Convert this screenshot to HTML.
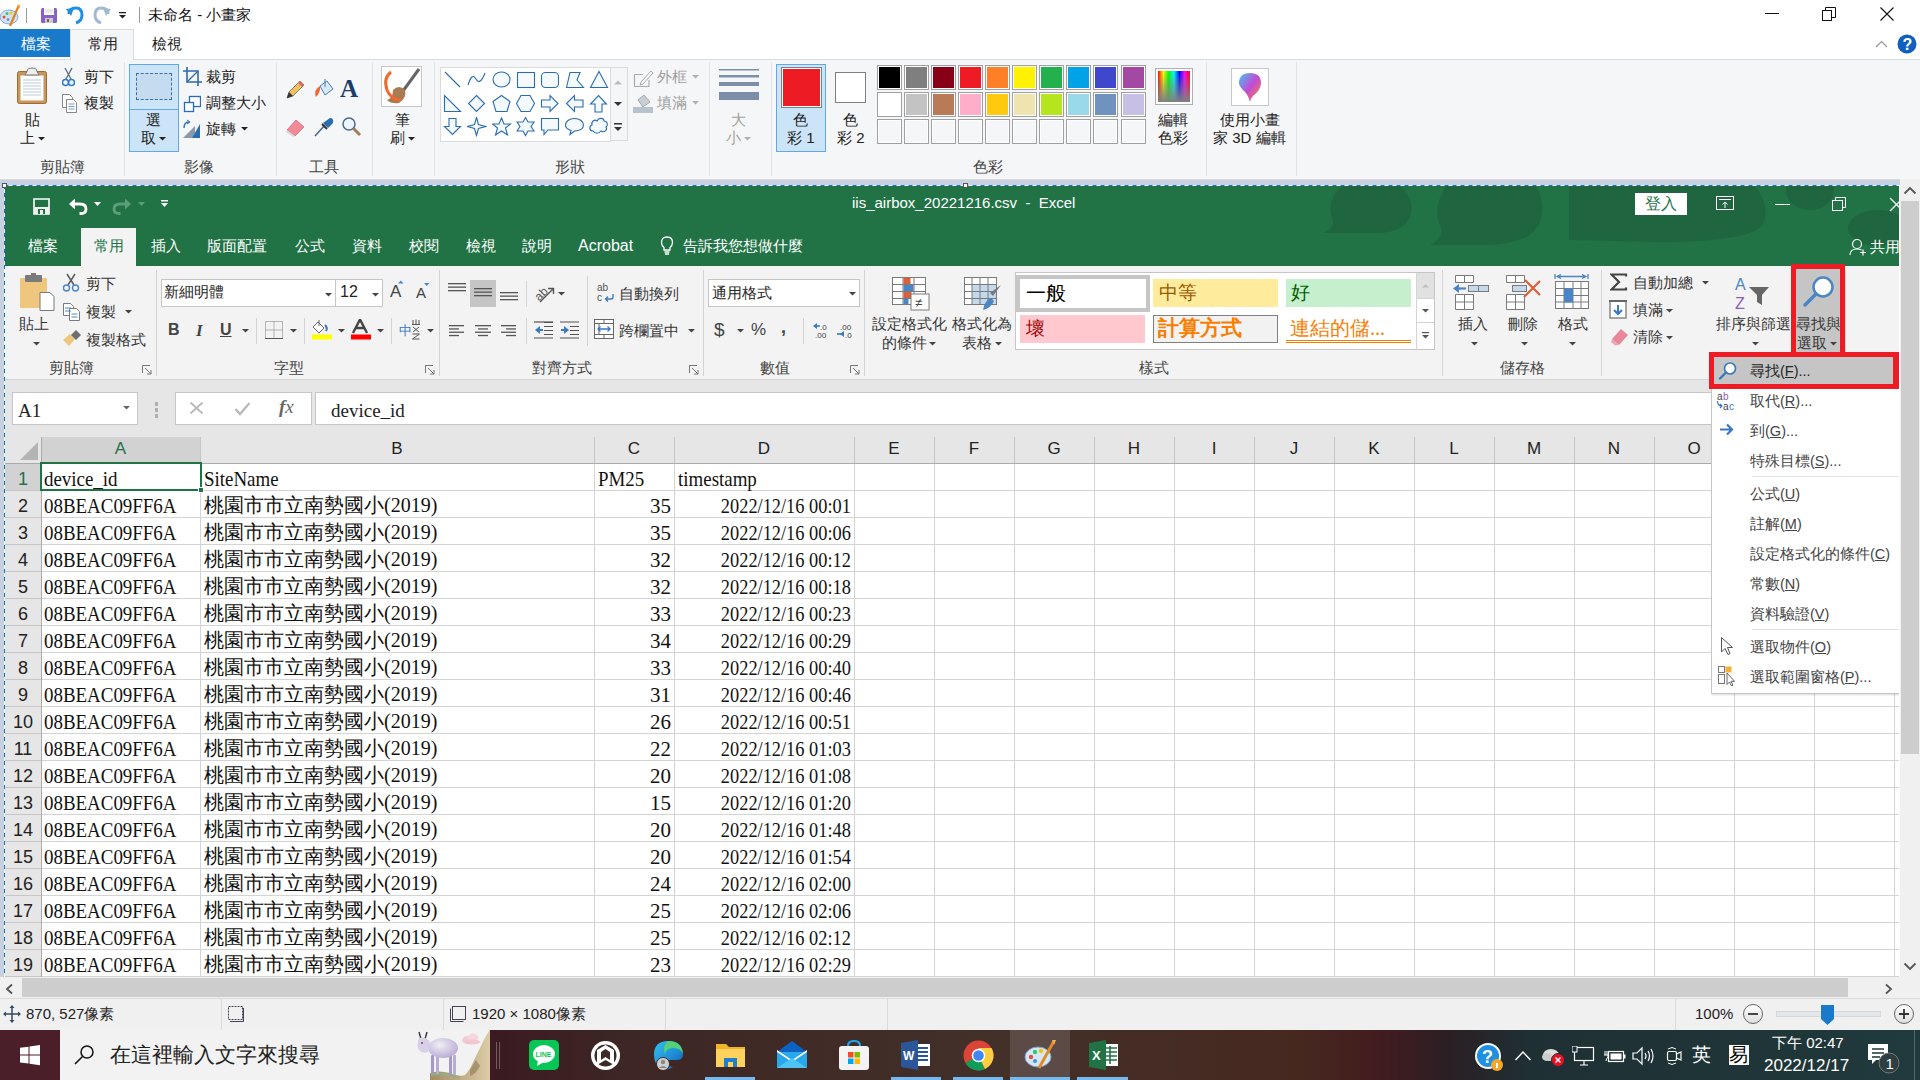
<!DOCTYPE html><html><head><meta charset="utf-8"><style>
*{box-sizing:border-box}
body{margin:0;width:1920px;height:1080px;position:relative;overflow:hidden;background:#fff;font-family:"Liberation Sans",sans-serif;color:#000}
.a{position:absolute}
.t{position:absolute;white-space:nowrap;line-height:1}
</style></head><body><div class="a" style="left:0px;top:0px;width:1920px;height:30px;background:#fff"></div><div class="a" style="left:0px;top:59px;width:1920px;height:121px;background:#f5f6f7;border-top:1px solid #dadbdc;border-bottom:1px solid #dadbdc"></div><div class="a" style="left:0px;top:29px;width:70px;height:28px;background:#1979ca"></div><div class="a" style="left:70px;top:29px;width:64px;height:31px;background:#f5f6f7;border:1px solid #dadbdc;border-bottom:none"></div><svg class="a" style="left:0px;top:4px" width="21" height="22" viewBox="0 0 21 22"><ellipse cx="9" cy="13" rx="9" ry="7" fill="#cfe3f3" stroke="#6e9bc8" stroke-width="0.8"/><circle cx="4" cy="13" r="1.5" fill="#e74c3c"/><circle cx="7" cy="9.5" r="1.5" fill="#2ecc71"/><circle cx="11" cy="9" r="1.5" fill="#f1c40f"/><circle cx="8" cy="15.5" r="1.3" fill="#3498db"/><path d="M19 1L10 22" stroke="#e67e22" stroke-width="2.2"/><path d="M17.5 1h3l-1 4z" fill="#f5b041"/></svg><div class="a" style="left:26px;top:8px;width:1px;height:15px;background:#999"></div><svg class="a" style="left:41px;top:8px" width="17" height="16" viewBox="0 0 17 16"><rect x="0" y="0" width="16" height="15" rx="1.5" fill="#8a5fc7"/><rect x="3" y="0" width="10" height="7" fill="#fff"/><path d="M4 2h8M4 4h8" stroke="#bbb" stroke-width="0.7"/><rect x="4" y="10" width="8" height="5" fill="#ccc"/><rect x="6" y="11" width="2" height="3" fill="#666"/></svg><svg class="a" style="left:66px;top:5px" width="19" height="20" viewBox="0 0 19 20"><path d="M3 9 Q3 3 10 3 Q16 3 16 10 Q16 16 10 18" fill="none" stroke="#1e8fe1" stroke-width="3"/><path d="M0 4L5 11L8 3z" fill="#1e8fe1"/></svg><svg class="a" style="left:92px;top:5px" width="19" height="20" viewBox="0 0 19 20"><path d="M16 9 Q16 3 9 3 Q3 3 3 10 Q3 16 9 18" fill="none" stroke="#a3b8d2" stroke-width="3"/><path d="M19 4L14 11L11 3z" fill="#a3b8d2"/></svg><svg class="a" style="left:119px;top:12px" width="8" height="8" viewBox="0 0 8 8"><rect x="0" y="0" width="7" height="1.3" fill="#222"/><path d="M0 3h7l-3.5 3.5z" fill="#222"/></svg><div class="a" style="left:139px;top:7px;width:1px;height:16px;background:#999"></div><div class="t" style="left:148px;top:7px;font-size:15px;color:#111;">未命名 - 小畫家</div><div class="a" style="left:1765px;top:13px;width:14px;height:1px;background:#111"></div><svg class="a" style="left:1822px;top:7px" width="14" height="14" viewBox="0 0 14 14"><rect x="0.5" y="3.5" width="9" height="10" fill="none" stroke="#111"/><path d="M3.5 3.5V0.5H13.5V10.5H9.5" fill="none" stroke="#111"/></svg><svg class="a" style="left:1880px;top:7px" width="14" height="14" viewBox="0 0 14 14"><path d="M0.5 0.5L13.5 13.5M13.5 0.5L0.5 13.5" stroke="#111" stroke-width="1.1"/></svg><div class="t" style="left:21px;top:36px;font-size:15px;color:#fff;">檔案</div><div class="t" style="left:88px;top:36px;font-size:15px;color:#222;">常用</div><div class="t" style="left:152px;top:36px;font-size:15px;color:#222;">檢視</div><svg class="a" style="left:1875px;top:40px" width="13" height="8" viewBox="0 0 13 8"><path d="M1 7L6.5 1.5L12 7" fill="none" stroke="#999" stroke-width="1.2"/></svg><svg class="a" style="left:1897px;top:34px" width="20" height="20" viewBox="0 0 20 20"><circle cx="10" cy="10" r="9.5" fill="#1160c0"/><text x="5.5" y="16" font-size="16" font-weight="bold" fill="#fff" font-family="Liberation Sans">?</text></svg><div class="a" style="left:124px;top:62px;width:1px;height:114px;background:#e1e2e4"></div><div class="a" style="left:276px;top:62px;width:1px;height:114px;background:#e1e2e4"></div><div class="a" style="left:372px;top:62px;width:1px;height:114px;background:#e1e2e4"></div><div class="a" style="left:434px;top:62px;width:1px;height:114px;background:#e1e2e4"></div><div class="a" style="left:709px;top:62px;width:1px;height:114px;background:#e1e2e4"></div><div class="a" style="left:771px;top:62px;width:1px;height:114px;background:#e1e2e4"></div><div class="a" style="left:1206px;top:62px;width:1px;height:114px;background:#e1e2e4"></div><div class="a" style="left:1296px;top:62px;width:1px;height:114px;background:#e1e2e4"></div><svg class="a" style="left:16px;top:67px" width="32" height="38" viewBox="0 0 32 38"><rect x="1.5" y="4.5" width="29" height="32" rx="2" fill="#c8955a" stroke="#a06a30"/><rect x="4.5" y="8.5" width="23" height="25" fill="#fff"/><path d="M7 13h18M7 16h18M7 19h18M7 22h18M7 25h18M7 28h18" stroke="#b9c9dc"/><path d="M11 4.5 Q11 1 16 1 Q21 1 21 4.5 L23 8 H9z" fill="#eee" stroke="#777"/></svg><div class="t" style="left:25px;top:112px;font-size:15px;color:#222;">貼</div><div class="t" style="left:20px;top:130px;font-size:15px;color:#222;">上</div><svg class="a" style="left:38px;top:137px" width="7" height="4" viewBox="0 0 7 4"><path d="M0 0h7l-3.5 3.5z" fill="#222"/></svg><svg class="a" style="left:62px;top:67px" width="13" height="20" viewBox="0 0 13 20"><path d="M3 1L9 12M10 1L4 12" stroke="#5a6a7a" stroke-width="1.3"/><circle cx="3.5" cy="15.5" r="3" fill="none" stroke="#2b7bd3" stroke-width="1.5"/><circle cx="9.5" cy="15.5" r="3" fill="none" stroke="#2b7bd3" stroke-width="1.5"/></svg><div class="t" style="left:84px;top:69px;font-size:15px;color:#222;">剪下</div><svg class="a" style="left:61px;top:93px" width="17" height="21" viewBox="0 0 17 21"><path d="M1.5 1.5h7l3 3v10h-10z" fill="#fff" stroke="#888"/><path d="M5.5 6.5h7l3 3v10h-10z" fill="#fff" stroke="#888"/><path d="M7.5 11h6M7.5 13.5h6M7.5 16h6" stroke="#6b9bd2"/></svg><div class="t" style="left:84px;top:95px;font-size:15px;color:#222;">複製</div><div class="t" style="left:40px;top:159px;font-size:15px;color:#444;">剪貼簿</div><div class="a" style="left:129px;top:64px;width:50px;height:88px;background:#cce4f7;border:1px solid #62a7e6"></div><div class="a" style="left:130px;top:109px;width:48px;height:1px;background:#62a7e6"></div><div class="a" style="left:136px;top:73px;width:36px;height:27px;border:1px dashed #3a6ea5;background:#c5dcf0"></div><div class="t" style="left:146px;top:112px;font-size:15px;color:#222;">選</div><div class="t" style="left:141px;top:130px;font-size:15px;color:#222;">取</div><svg class="a" style="left:159px;top:137px" width="7" height="4" viewBox="0 0 7 4"><path d="M0 0h7l-3.5 3.5z" fill="#222"/></svg><svg class="a" style="left:183px;top:67px" width="19" height="20" viewBox="0 0 19 20"><path d="M4 0v15h15M0 4h15v15" fill="none" stroke="#2b6cb0" stroke-width="1.6"/><path d="M4 15L15 4" stroke="#2b6cb0" stroke-width="1.2"/></svg><div class="t" style="left:206px;top:69px;font-size:15px;color:#222;">裁剪</div><svg class="a" style="left:183px;top:95px" width="18" height="18" viewBox="0 0 18 18"><rect x="6.5" y="1.5" width="11" height="10" fill="#fff" stroke="#2b6cb0" stroke-width="1.3"/><rect x="1.5" y="7.5" width="9" height="9" fill="#fff" stroke="#2b6cb0" stroke-width="1.3"/></svg><div class="t" style="left:206px;top:95px;font-size:15px;color:#222;">調整大小</div><svg class="a" style="left:182px;top:119px" width="19" height="19" viewBox="0 0 19 19"><path d="M1 19L13 7V19z" fill="#8a9aab"/><path d="M10 19L18 5V19z" fill="#2b6cb0"/><path d="M2 9Q2 3 7 3" fill="none" stroke="#2b6cb0" stroke-width="1.3"/><path d="M5 1L8 3L5 5" fill="none" stroke="#2b6cb0"/></svg><div class="t" style="left:206px;top:121px;font-size:15px;color:#222;">旋轉</div><svg class="a" style="left:241px;top:127px" width="7" height="4" viewBox="0 0 7 4"><path d="M0 0h7l-3.5 3.5z" fill="#222"/></svg><div class="t" style="left:184px;top:159px;font-size:15px;color:#444;">影像</div><svg class="a" style="left:285px;top:79px" width="21" height="21" viewBox="0 0 21 21"><path d="M2 19L4 13L15 2L19 6L8 17z" fill="#f2c25c" stroke="#666" stroke-width="0.8"/><path d="M15 2L19 6L17 8L13 4z" fill="#e26b6b"/><path d="M2 19L4 13L8 17z" fill="#333"/></svg><svg class="a" style="left:313px;top:78px" width="21" height="22" viewBox="0 0 21 22"><path d="M7 8L14 3L20 11L12 17z" fill="#dbe9f6" stroke="#4a7eb5"/><path d="M12 1v8" stroke="#4a7eb5"/><path d="M7 8Q0 12 3 19Q6 16 7 12z" fill="#ef6a2e"/></svg><div class="t" style="left:340px;top:76px;font-size:25px;color:#1b3d6d;font-family:'Liberation Serif',serif"><b>A</b></div><svg class="a" style="left:285px;top:117px" width="21" height="21" viewBox="0 0 21 21"><path d="M2 13L11 3L19 10L10 19z" fill="#f08a98" stroke="#d46a78" stroke-width="0.8"/><path d="M2 13L10 19L8 20L1 15z" fill="#d9d9d9"/></svg><svg class="a" style="left:313px;top:116px" width="21" height="22" viewBox="0 0 21 22"><path d="M2 20L12 9" stroke="#4a6a8a" stroke-width="1.6"/><path d="M10 7L15 12L20 7Q21 2 17 2z" fill="#2b6cb0"/><path d="M9 8L14 13" stroke="#333" stroke-width="2"/></svg><svg class="a" style="left:341px;top:116px" width="21" height="22" viewBox="0 0 21 22"><circle cx="8" cy="8" r="6" fill="#eef5fb" stroke="#4a6a8a" stroke-width="1.5"/><path d="M12.5 12.5L19 19" stroke="#a67c52" stroke-width="3"/></svg><div class="t" style="left:309px;top:159px;font-size:15px;color:#444;">工具</div><svg class="a" style="left:381px;top:66px" width="42" height="42" viewBox="0 0 42 42"><rect x="0.5" y="0.5" width="40" height="40" fill="#fff" stroke="#c8c8c8"/><path d="M38 3L22 25" stroke="#666" stroke-width="3"/><path d="M12 24 Q18 18 24 24 Q26 32 18 37 Q10 38 6 34 Q12 32 12 24z" fill="#a97b50"/><path d="M10 6 Q2 12 6 24 Q10 34 20 34" fill="none" stroke="#ef6a2e" stroke-width="3"/></svg><div class="t" style="left:395px;top:112px;font-size:15px;color:#222;">筆</div><div class="t" style="left:390px;top:130px;font-size:15px;color:#222;">刷</div><svg class="a" style="left:408px;top:137px" width="7" height="4" viewBox="0 0 7 4"><path d="M0 0h7l-3.5 3.5z" fill="#222"/></svg><div class="a" style="left:440px;top:67px;width:171px;height:75px;background:#fff;border:1px solid #dadbdc"></div><div class="a" style="left:610px;top:67px;width:18px;height:74px;background:#f5f6f7;border:1px solid #dadbdc"></div><svg class="a" style="left:614px;top:80px" width="9" height="5" viewBox="0 0 9 5"><path d="M0 4.5h8l-4-4z" fill="#bbb"/></svg><svg class="a" style="left:614px;top:102px" width="9" height="5" viewBox="0 0 9 5"><path d="M0 0h8l-4 4z" fill="#333"/></svg><svg class="a" style="left:614px;top:123px" width="9" height="9" viewBox="0 0 9 9"><rect x="0" y="0" width="8" height="1.5" fill="#333"/><path d="M0 4h8l-4 4z" fill="#333"/></svg><svg class="a" style="left:443.0px;top:70.0px" width="20" height="20" viewBox="0 0 20 20"><g fill="#f4f9fd" stroke="#2b6cb0" stroke-width="1.1"><path d="M2 2L17 17" /></g></svg><svg class="a" style="left:467.3px;top:70.0px" width="20" height="20" viewBox="0 0 20 20"><g fill="#f4f9fd" stroke="#2b6cb0" stroke-width="1.1"><path d="M1 15 Q5 2 9 9 Q13 16 18 3"/></g></svg><svg class="a" style="left:491.6px;top:70.0px" width="20" height="20" viewBox="0 0 20 20"><g fill="#f4f9fd" stroke="#2b6cb0" stroke-width="1.1"><ellipse cx="9.5" cy="9.5" rx="8.5" ry="7.5"/></g></svg><svg class="a" style="left:515.9px;top:70.0px" width="20" height="20" viewBox="0 0 20 20"><g fill="#f4f9fd" stroke="#2b6cb0" stroke-width="1.1"><rect x="1.5" y="2.5" width="17" height="15"/></g></svg><svg class="a" style="left:540.2px;top:70.0px" width="20" height="20" viewBox="0 0 20 20"><g fill="#f4f9fd" stroke="#2b6cb0" stroke-width="1.1"><rect x="1.5" y="2.5" width="17" height="15" rx="4"/></g></svg><svg class="a" style="left:564.5px;top:70.0px" width="20" height="20" viewBox="0 0 20 20"><g fill="#f4f9fd" stroke="#2b6cb0" stroke-width="1.1"><path d="M1.5 17.5L5 2.5H15L12 10L18.5 17.5z"/></g></svg><svg class="a" style="left:588.8px;top:70.0px" width="20" height="20" viewBox="0 0 20 20"><g fill="#f4f9fd" stroke="#2b6cb0" stroke-width="1.1"><path d="M10 1.5L18.5 17.5H1.5z"/></g></svg><svg class="a" style="left:443.0px;top:93.5px" width="20" height="20" viewBox="0 0 20 20"><g fill="#f4f9fd" stroke="#2b6cb0" stroke-width="1.1"><path d="M1.5 1.5V17.5H17.5z"/></g></svg><svg class="a" style="left:467.3px;top:93.5px" width="20" height="20" viewBox="0 0 20 20"><g fill="#f4f9fd" stroke="#2b6cb0" stroke-width="1.1"><path d="M9.5 1.5L17.5 9.5L9.5 17.5L1.5 9.5z"/></g></svg><svg class="a" style="left:491.6px;top:93.5px" width="20" height="20" viewBox="0 0 20 20"><g fill="#f4f9fd" stroke="#2b6cb0" stroke-width="1.1"><path d="M9.5 1.5L18 7.5L15 17.5H4L1 7.5z"/></g></svg><svg class="a" style="left:515.9px;top:93.5px" width="20" height="20" viewBox="0 0 20 20"><g fill="#f4f9fd" stroke="#2b6cb0" stroke-width="1.1"><path d="M5 1.5H14L18.5 9.5L14 17.5H5L0.5 9.5z"/></g></svg><svg class="a" style="left:540.2px;top:93.5px" width="20" height="20" viewBox="0 0 20 20"><g fill="#f4f9fd" stroke="#2b6cb0" stroke-width="1.1"><path d="M1.5 6H10V1.5L18 9.5L10 17.5V13H1.5z"/></g></svg><svg class="a" style="left:564.5px;top:93.5px" width="20" height="20" viewBox="0 0 20 20"><g fill="#f4f9fd" stroke="#2b6cb0" stroke-width="1.1"><path d="M18 6H9.5V1.5L1.5 9.5L9.5 17.5V13H18z"/></g></svg><svg class="a" style="left:588.8px;top:93.5px" width="20" height="20" viewBox="0 0 20 20"><g fill="#f4f9fd" stroke="#2b6cb0" stroke-width="1.1"><path d="M6 18V10H1.5L9.5 1.5L17.5 10H13V18z"/></g></svg><svg class="a" style="left:443.0px;top:117.0px" width="20" height="20" viewBox="0 0 20 20"><g fill="#f4f9fd" stroke="#2b6cb0" stroke-width="1.1"><path d="M6 1.5V9.5H1.5L9.5 17.5L17.5 9.5H13V1.5z"/></g></svg><svg class="a" style="left:467.3px;top:117.0px" width="20" height="20" viewBox="0 0 20 20"><g fill="#f4f9fd" stroke="#2b6cb0" stroke-width="1.1"><path d="M9.5 0.5L11.5 7.5L18.5 9.5L11.5 11.5L9.5 18.5L7.5 11.5L0.5 9.5L7.5 7.5z"/></g></svg><svg class="a" style="left:491.6px;top:117.0px" width="20" height="20" viewBox="0 0 20 20"><g fill="#f4f9fd" stroke="#2b6cb0" stroke-width="1.1"><path d="M9.5 1L12 7H18.5L13.5 11L15.5 18L9.5 14L3.5 18L5.5 11L0.5 7H7z"/></g></svg><svg class="a" style="left:515.9px;top:117.0px" width="20" height="20" viewBox="0 0 20 20"><g fill="#f4f9fd" stroke="#2b6cb0" stroke-width="1.1"><path d="M9.5 0.5L12 5H18L15 9.5L18 14H12L9.5 18.5L7 14H1L4 9.5L1 5H7z"/></g></svg><svg class="a" style="left:540.2px;top:117.0px" width="20" height="20" viewBox="0 0 20 20"><g fill="#f4f9fd" stroke="#2b6cb0" stroke-width="1.1"><path d="M1.5 1.5H18.5V13H8L4 17.5V13H1.5z"/></g></svg><svg class="a" style="left:564.5px;top:117.0px" width="20" height="20" viewBox="0 0 20 20"><g fill="#f4f9fd" stroke="#2b6cb0" stroke-width="1.1"><path d="M9.5 1.5C15 1.5 18.5 4.5 18.5 8C18.5 11.5 15 14 9.5 14L5 17.5L6 13.5C3 12.5 0.5 10.5 0.5 8C0.5 4.5 4 1.5 9.5 1.5z"/></g></svg><svg class="a" style="left:588.8px;top:117.0px" width="20" height="20" viewBox="0 0 20 20"><g fill="#f4f9fd" stroke="#2b6cb0" stroke-width="1.1"><path d="M4 14C0 14 0 9 3 8C2 4 6 2 8 4C10 0 15 1 15 4C19 4 19 9 17 10C19 13 15 16 12 14C10 17 6 17 4 14z"/></g></svg><svg class="a" style="left:633px;top:69px" width="21" height="19" viewBox="0 0 21 19"><path d="M1.5 5.5H10M1.5 5.5V17.5H16V11" fill="none" stroke="#a9a9a9" stroke-width="1.1"/><path d="M8 13L18 2L20 4L10 15L7 16z" fill="#fff" stroke="#a9a9a9"/></svg><div class="t" style="left:657px;top:69px;font-size:15px;color:#a0a0a0;">外框</div><svg class="a" style="left:692px;top:75px" width="7" height="4" viewBox="0 0 7 4"><path d="M0 0h7l-3.5 3.5z" fill="#b0b0b0"/></svg><svg class="a" style="left:633px;top:92px" width="21" height="21" viewBox="0 0 21 21"><path d="M5 8L11 3L17 10L10 15z" fill="#c7cdd4" stroke="#a9a9a9"/><rect x="0" y="15" width="20" height="6" fill="#b7c2cf"/></svg><div class="t" style="left:657px;top:95px;font-size:15px;color:#a0a0a0;">填滿</div><svg class="a" style="left:692px;top:101px" width="7" height="4" viewBox="0 0 7 4"><path d="M0 0h7l-3.5 3.5z" fill="#b0b0b0"/></svg><div class="t" style="left:555px;top:159px;font-size:15px;color:#444;">形狀</div><svg class="a" style="left:719px;top:69px" width="41" height="33" viewBox="0 0 41 33"><rect x="0" y="0" width="40" height="1.5" fill="#7c8eaa"/><rect x="0" y="6" width="40" height="2.5" fill="#7c8eaa"/><rect x="0" y="13" width="40" height="4" fill="#7c8eaa"/><rect x="0" y="23" width="40" height="8" fill="#7c8eaa"/></svg><div class="t" style="left:731px;top:112px;font-size:15px;color:#a0a0a0;">大</div><div class="t" style="left:726px;top:130px;font-size:15px;color:#a0a0a0;">小</div><svg class="a" style="left:744px;top:137px" width="7" height="4" viewBox="0 0 7 4"><path d="M0 0h7l-3.5 3.5z" fill="#b0b0b0"/></svg><div class="a" style="left:776px;top:64px;width:50px;height:88px;background:#cce4f7;border:1px solid #62a7e6"></div><div class="a" style="left:781px;top:67px;width:41px;height:41px;background:#ed1c24;border:1px solid #808080;box-shadow:inset 0 0 0 1px #fff"></div><div class="t" style="left:793px;top:112px;font-size:15px;color:#222;">色</div><div class="t" style="left:787px;top:130px;font-size:15px;color:#222;">彩 1</div><div class="a" style="left:835px;top:72px;width:31px;height:31px;background:#fff;border:1px solid #808080"></div><div class="t" style="left:843px;top:112px;font-size:15px;color:#222;">色</div><div class="t" style="left:837px;top:130px;font-size:15px;color:#222;">彩 2</div><div class="a" style="left:877.0px;top:65px;width:25px;height:25px;border:1px solid #a0a0a0;box-shadow:inset 0 0 0 1px #fff;background:#000000"></div><div class="a" style="left:877.0px;top:92px;width:25px;height:25px;border:1px solid #a0a0a0;box-shadow:inset 0 0 0 1px #fff;background:#ffffff"></div><div class="a" style="left:877.0px;top:119px;width:25px;height:25px;border:1px solid #a0a0a0;box-shadow:inset 0 0 0 1px #fff;background:#f5f6f7"></div><div class="a" style="left:904.0px;top:65px;width:25px;height:25px;border:1px solid #a0a0a0;box-shadow:inset 0 0 0 1px #fff;background:#7f7f7f"></div><div class="a" style="left:904.0px;top:92px;width:25px;height:25px;border:1px solid #a0a0a0;box-shadow:inset 0 0 0 1px #fff;background:#c3c3c3"></div><div class="a" style="left:904.0px;top:119px;width:25px;height:25px;border:1px solid #a0a0a0;box-shadow:inset 0 0 0 1px #fff;background:#f5f6f7"></div><div class="a" style="left:931.1px;top:65px;width:25px;height:25px;border:1px solid #a0a0a0;box-shadow:inset 0 0 0 1px #fff;background:#880015"></div><div class="a" style="left:931.1px;top:92px;width:25px;height:25px;border:1px solid #a0a0a0;box-shadow:inset 0 0 0 1px #fff;background:#b97a57"></div><div class="a" style="left:931.1px;top:119px;width:25px;height:25px;border:1px solid #a0a0a0;box-shadow:inset 0 0 0 1px #fff;background:#f5f6f7"></div><div class="a" style="left:958.1px;top:65px;width:25px;height:25px;border:1px solid #a0a0a0;box-shadow:inset 0 0 0 1px #fff;background:#ed1c24"></div><div class="a" style="left:958.1px;top:92px;width:25px;height:25px;border:1px solid #a0a0a0;box-shadow:inset 0 0 0 1px #fff;background:#ffaec9"></div><div class="a" style="left:958.1px;top:119px;width:25px;height:25px;border:1px solid #a0a0a0;box-shadow:inset 0 0 0 1px #fff;background:#f5f6f7"></div><div class="a" style="left:985.2px;top:65px;width:25px;height:25px;border:1px solid #a0a0a0;box-shadow:inset 0 0 0 1px #fff;background:#ff7f27"></div><div class="a" style="left:985.2px;top:92px;width:25px;height:25px;border:1px solid #a0a0a0;box-shadow:inset 0 0 0 1px #fff;background:#ffc90e"></div><div class="a" style="left:985.2px;top:119px;width:25px;height:25px;border:1px solid #a0a0a0;box-shadow:inset 0 0 0 1px #fff;background:#f5f6f7"></div><div class="a" style="left:1012.2px;top:65px;width:25px;height:25px;border:1px solid #a0a0a0;box-shadow:inset 0 0 0 1px #fff;background:#fff200"></div><div class="a" style="left:1012.2px;top:92px;width:25px;height:25px;border:1px solid #a0a0a0;box-shadow:inset 0 0 0 1px #fff;background:#efe4b0"></div><div class="a" style="left:1012.2px;top:119px;width:25px;height:25px;border:1px solid #a0a0a0;box-shadow:inset 0 0 0 1px #fff;background:#f5f6f7"></div><div class="a" style="left:1039.3px;top:65px;width:25px;height:25px;border:1px solid #a0a0a0;box-shadow:inset 0 0 0 1px #fff;background:#22b14c"></div><div class="a" style="left:1039.3px;top:92px;width:25px;height:25px;border:1px solid #a0a0a0;box-shadow:inset 0 0 0 1px #fff;background:#b5e61d"></div><div class="a" style="left:1039.3px;top:119px;width:25px;height:25px;border:1px solid #a0a0a0;box-shadow:inset 0 0 0 1px #fff;background:#f5f6f7"></div><div class="a" style="left:1066.3px;top:65px;width:25px;height:25px;border:1px solid #a0a0a0;box-shadow:inset 0 0 0 1px #fff;background:#00a2e8"></div><div class="a" style="left:1066.3px;top:92px;width:25px;height:25px;border:1px solid #a0a0a0;box-shadow:inset 0 0 0 1px #fff;background:#99d9ea"></div><div class="a" style="left:1066.3px;top:119px;width:25px;height:25px;border:1px solid #a0a0a0;box-shadow:inset 0 0 0 1px #fff;background:#f5f6f7"></div><div class="a" style="left:1093.4px;top:65px;width:25px;height:25px;border:1px solid #a0a0a0;box-shadow:inset 0 0 0 1px #fff;background:#3f48cc"></div><div class="a" style="left:1093.4px;top:92px;width:25px;height:25px;border:1px solid #a0a0a0;box-shadow:inset 0 0 0 1px #fff;background:#7092be"></div><div class="a" style="left:1093.4px;top:119px;width:25px;height:25px;border:1px solid #a0a0a0;box-shadow:inset 0 0 0 1px #fff;background:#f5f6f7"></div><div class="a" style="left:1120.5px;top:65px;width:25px;height:25px;border:1px solid #a0a0a0;box-shadow:inset 0 0 0 1px #fff;background:#a349a4"></div><div class="a" style="left:1120.5px;top:92px;width:25px;height:25px;border:1px solid #a0a0a0;box-shadow:inset 0 0 0 1px #fff;background:#c8bfe7"></div><div class="a" style="left:1120.5px;top:119px;width:25px;height:25px;border:1px solid #a0a0a0;box-shadow:inset 0 0 0 1px #fff;background:#f5f6f7"></div><svg class="a" style="left:1155px;top:68px" width="38" height="37"><defs><linearGradient id="rb" x1="0" y1="0" x2="1" y2="0"><stop offset="0" stop-color="#f00"/><stop offset=".17" stop-color="#ff0"/><stop offset=".33" stop-color="#0f0"/><stop offset=".5" stop-color="#0ff"/><stop offset=".67" stop-color="#00f"/><stop offset=".83" stop-color="#f0f"/><stop offset="1" stop-color="#f00"/></linearGradient><linearGradient id="gr" x1="0" y1="0" x2="0" y2="1"><stop offset="0" stop-color="#808080" stop-opacity="0"/><stop offset="1" stop-color="#808080" stop-opacity="1"/></linearGradient></defs><rect x="0.5" y="0.5" width="37" height="36" fill="#fff" stroke="#b0b0b0"/><rect x="3" y="3" width="32" height="31" fill="url(#rb)"/><rect x="3" y="3" width="32" height="31" fill="url(#gr)"/></svg><div class="t" style="left:1158px;top:112px;font-size:15px;color:#222;">編輯</div><div class="t" style="left:1158px;top:130px;font-size:15px;color:#222;">色彩</div><div class="t" style="left:973px;top:159px;font-size:15px;color:#444;">色彩</div><svg class="a" style="left:1231px;top:68px" width="38" height="38"><defs><linearGradient id="p3" x1="0" y1="0" x2="1" y2="1"><stop offset="0" stop-color="#3fc8f0"/><stop offset=".5" stop-color="#c34ad6"/><stop offset="1" stop-color="#ff8a2a"/></linearGradient></defs><rect x="0.5" y="0.5" width="37" height="37" fill="#fff" stroke="#c8c8c8"/><path d="M19 5 Q30 5 30 15 Q30 22 22 28 Q20 30 19 34 Q17 26 12 22 Q8 18 8 15 Q8 5 19 5z" fill="url(#p3)"/></svg><div class="t" style="left:1220px;top:112px;font-size:15px;color:#222;">使用小畫</div><div class="t" style="left:1213px;top:130px;font-size:15px;color:#222;">家 3D 編輯</div><div class="a" style="left:0px;top:180px;width:1900px;height:800px;background:#c8d1e0"></div><div class="a" style="left:5px;top:186px;width:1895px;height:80px;background:#217346"></div><div class="a" style="left:5px;top:266px;width:1895px;height:114px;background:#f3f3f3;border-bottom:1px solid #d4d4d4"></div><div class="a" style="left:5px;top:380px;width:1895px;height:57px;background:#e6e6e6"></div><div class="a" style="left:5px;top:437px;width:1895px;height:540px;background:#fff"></div><svg class="a" style="left:1300px;top:186px" width="600" height="80"><g fill="#1f6640"><path d="M23 47 Q36 42 32 32 Q26 14 42 0 H100 Q114 12 111 28 Q106 46 78 47 Z"/><path d="M130 59 Q146 50 140 40 Q132 22 146 0 H236 Q246 18 240 36 Q232 57 190 59 Z"/><path d="M269 0 H455 Q472 22 462 40 Q445 56 360 56 L269 54 Z"/><ellipse cx="510" cy="4" rx="24" ry="20"/><ellipse cx="578" cy="42" rx="30" ry="18"/></g></svg><svg class="a" style="left:33px;top:198px" width="17" height="17"><path d="M1 1h15v15h-15z" fill="none" stroke="#fff" stroke-width="1.6"/><rect x="3" y="2" width="11" height="6" fill="#217346"/><rect x="1" y="9" width="15" height="7" fill="#f0f0f0"/><rect x="5" y="11" width="7" height="5" fill="#217346"/><rect x="7" y="12" width="3" height="4" fill="#f0f0f0"/></svg><svg class="a" style="left:69px;top:198px" width="20" height="17"><path d="M0 6L6 0.5V11.5z" fill="#fff"/><path d="M5 6H11Q17 6 17 11Q17 15.5 12 15.5H10.5" fill="none" stroke="#fff" stroke-width="2.8"/></svg><svg class="a" style="left:94px;top:202px" width="8" height="5"><path d="M0 0h7l-3.5 4z" fill="#fff"/></svg><svg class="a" style="left:112px;top:198px" width="20" height="17"><path d="M19 6L13 0.5V11.5z" fill="#5e9c7a"/><path d="M14 6H8Q2 6 2 11Q2 15.5 7 15.5H8.5" fill="none" stroke="#5e9c7a" stroke-width="2.8"/></svg><svg class="a" style="left:138px;top:202px" width="8" height="5"><path d="M0 0h7l-3.5 4z" fill="#5e9b79"/></svg><svg class="a" style="left:161px;top:200px" width="8" height="9"><rect x="0" y="0" width="7" height="1.5" fill="#fff"/><path d="M0 3h7l-3.5 4z" fill="#fff"/></svg><div class="t" style="left:852px;top:195px;font-size:15px;color:#fff;">iis_airbox_20221216.csv&nbsp;&nbsp;-&nbsp;&nbsp;Excel</div><div class="a" style="left:1635px;top:193px;width:52px;height:22px;background:#fff"></div><div class="t" style="left:1645px;top:196px;font-size:16px;color:#217346;">登入</div><svg class="a" style="left:1716px;top:196px" width="18" height="15"><rect x="0.5" y="0.5" width="17" height="13" fill="none" stroke="#fff"/><path d="M3 3.5h12" stroke="#fff"/><path d="M9 6v6 M6.5 8.5 L9 6 L11.5 8.5" fill="none" stroke="#fff"/></svg><div class="a" style="left:1775px;top:204px;width:15px;height:1px;background:#fff"></div><svg class="a" style="left:1832px;top:197px" width="15" height="15"><rect x="0.5" y="3.5" width="10" height="10" fill="none" stroke="#fff"/><path d="M3.5 3.5V0.5H13.5V10.5H10.5" fill="none" stroke="#fff"/></svg><svg class="a" style="left:1889px;top:197px" width="15" height="15"><path d="M1 1L14 14M14 1L1 14" stroke="#fff" stroke-width="1.2"/></svg><div class="a" style="left:81px;top:228px;width:55px;height:38px;background:#f3f3f3"></div><div class="t" style="left:28px;top:238px;font-size:15px;color:#fff;">檔案</div><div class="t" style="left:94px;top:238px;font-size:15px;color:#217346;">常用</div><div class="t" style="left:151px;top:238px;font-size:15px;color:#fff;">插入</div><div class="t" style="left:207px;top:238px;font-size:15px;color:#fff;">版面配置</div><div class="t" style="left:295px;top:238px;font-size:15px;color:#fff;">公式</div><div class="t" style="left:352px;top:238px;font-size:15px;color:#fff;">資料</div><div class="t" style="left:409px;top:238px;font-size:15px;color:#fff;">校閱</div><div class="t" style="left:466px;top:238px;font-size:15px;color:#fff;">檢視</div><div class="t" style="left:522px;top:238px;font-size:15px;color:#fff;">說明</div><div class="t" style="left:578px;top:238px;font-size:16px;color:#fff;">Acrobat</div><div class="t" style="left:683px;top:238px;font-size:15px;color:#fff;">告訴我您想做什麼</div><svg class="a" style="left:660px;top:236px" width="14" height="20"><path d="M7 1 Q12.5 1 12.5 6.5 Q12.5 9.5 10 11.5 V14 H4 V11.5 Q1.5 9.5 1.5 6.5 Q1.5 1 7 1Z M4.5 16 H9.5 M5 18 H9" fill="none" stroke="#fff" stroke-width="1.3"/></svg><svg class="a" style="left:1849px;top:238px" width="18" height="18"><circle cx="8" cy="6" r="4.5" fill="none" stroke="#fff" stroke-width="1.2"/><path d="M1 17 Q1 11 8 11 Q11 11 12.5 12" fill="none" stroke="#fff" stroke-width="1.2"/><path d="M11 14.5h6M14 11.5v6" stroke="#fff" stroke-width="1.2"/></svg><div class="t" style="left:1870px;top:239px;font-size:15px;color:#fff;">共用</div><div class="a" style="left:156px;top:270px;width:1px;height:106px;background:#d4d4d4"></div><div class="a" style="left:439px;top:270px;width:1px;height:106px;background:#d4d4d4"></div><div class="a" style="left:703px;top:270px;width:1px;height:106px;background:#d4d4d4"></div><div class="a" style="left:864px;top:270px;width:1px;height:106px;background:#d4d4d4"></div><div class="a" style="left:1442px;top:270px;width:1px;height:106px;background:#d4d4d4"></div><div class="a" style="left:1601px;top:270px;width:1px;height:106px;background:#d4d4d4"></div><svg class="a" style="left:19px;top:272px" width="38" height="41" viewBox="0 0 38 41"><rect x="1" y="6" width="27" height="30" rx="1" fill="#eec67d"/><rect x="6" y="3" width="17" height="7" rx="1" fill="#7a7a7a"/><rect x="12" y="1" width="5" height="4" fill="#7a7a7a"/><path d="M21 20.5h10l4 4v14h-14z" fill="#fff" stroke="#7a7a7a"/></svg><div class="t" style="left:19px;top:316px;font-size:15px;color:#363636;">貼上</div><svg class="a" style="left:33px;top:342px" width="7" height="4" viewBox="0 0 7 4"><path d="M0 0h7l-3.5 3.5z" fill="#444"/></svg><svg class="a" style="left:62px;top:273px" width="18" height="20" viewBox="0 0 18 20"><path d="M5 1L12 12M13 1L6 12" stroke="#5b5b5b" stroke-width="1.5"/><circle cx="4.5" cy="15" r="3" fill="none" stroke="#4a86c5" stroke-width="1.4"/><circle cx="13.5" cy="15" r="3" fill="none" stroke="#4a86c5" stroke-width="1.4"/></svg><div class="t" style="left:86px;top:276px;font-size:15px;color:#363636;">剪下</div><svg class="a" style="left:62px;top:302px" width="19" height="19" viewBox="0 0 19 19"><path d="M1.5 1.5h7l3 3v9h-10z" fill="#fff" stroke="#7a7a7a"/><path d="M7.5 6.5h7l3 3v9h-10z" fill="#fff" stroke="#7a7a7a"/><path d="M3 6h6M3 9h6M9.5 12h6M9.5 15h6" stroke="#4a86c5"/></svg><div class="t" style="left:86px;top:304px;font-size:15px;color:#363636;">複製</div><svg class="a" style="left:125px;top:310px" width="7" height="4" viewBox="0 0 7 4"><path d="M0 0h7l-3.5 3.5z" fill="#444"/></svg><svg class="a" style="left:62px;top:330px" width="20" height="17" viewBox="0 0 20 17"><path d="M1 10 L8 4 L13 9 L7 16z" fill="#eec67d"/><path d="M9 5 L14 0 L19 5 L14 10z" fill="#6f6f6f"/></svg><div class="t" style="left:86px;top:332px;font-size:15px;color:#363636;">複製格式</div><div class="t" style="left:49px;top:360px;font-size:15px;color:#444;">剪貼簿</div><svg class="a" style="left:142px;top:365px" width="10" height="10" viewBox="0 0 10 10"><path d="M0.5 8V0.5H8" fill="none" stroke="#777"/><path d="M3 3L9 9M9 5V9H5" fill="none" stroke="#777"/></svg><div class="a" style="left:161px;top:279px;width:175px;height:28px;background:#fff;border:1px solid #c6c6c6"></div><div class="a" style="left:335px;top:279px;width:48px;height:28px;background:#fff;border:1px solid #c6c6c6"></div><div class="t" style="left:164px;top:284px;font-size:15px;color:#262626;">新細明體</div><svg class="a" style="left:325px;top:293px" width="7" height="4" viewBox="0 0 7 4"><path d="M0 0h7l-3.5 3.5z" fill="#444"/></svg><div class="t" style="left:340px;top:284px;font-size:16px;color:#262626;">12</div><svg class="a" style="left:372px;top:293px" width="7" height="4" viewBox="0 0 7 4"><path d="M0 0h7l-3.5 3.5z" fill="#444"/></svg><div class="t" style="left:390px;top:283px;font-size:17px;color:#444;">A</div><svg class="a" style="left:398px;top:280px" width="6" height="4" viewBox="0 0 6 4"><path d="M0 3.5h5.5l-2.75-3z" fill="#4a86c5"/></svg><div class="t" style="left:416px;top:285px;font-size:15px;color:#444;">A</div><svg class="a" style="left:424px;top:283px" width="6" height="4" viewBox="0 0 6 4"><path d="M0 0h5.5l-2.75 3z" fill="#4a86c5"/></svg><div class="t" style="left:168px;top:322px;font-size:16px;color:#444;"><b>B</b></div><div class="t" style="left:196px;top:322px;font-size:17px;color:#444;"><i><b style='font-family:Liberation Serif'>I</b></i></div><div class="t" style="left:220px;top:322px;font-size:16px;color:#444;"><b><u>U</u></b></div><svg class="a" style="left:242px;top:329px" width="7" height="4" viewBox="0 0 7 4"><path d="M0 0h7l-3.5 3.5z" fill="#444"/></svg><div class="a" style="left:256px;top:318px;width:1px;height:26px;background:#d4d4d4"></div><svg class="a" style="left:265px;top:321px" width="18" height="18" viewBox="0 0 18 18"><path d="M0.5 0.5h17v17h-17zM9 0.5v17M0.5 9h17" fill="none" stroke="#777" stroke-dasharray="1 1"/><path d="M0 17.5h18" stroke="#555"/></svg><svg class="a" style="left:290px;top:329px" width="7" height="4" viewBox="0 0 7 4"><path d="M0 0h7l-3.5 3.5z" fill="#444"/></svg><div class="a" style="left:304px;top:318px;width:1px;height:26px;background:#d4d4d4"></div><svg class="a" style="left:311px;top:319px" width="22" height="22" viewBox="0 0 22 22"><path d="M7 3 L13 9 L8 14 L2 8z" fill="#fff" stroke="#666"/><path d="M8 1v6" stroke="#666"/><path d="M14 6 Q17 9 15 12" fill="none" stroke="#3a78c2" stroke-width="2"/><rect x="1" y="15.5" width="20" height="5" fill="#ffff00"/></svg><svg class="a" style="left:338px;top:329px" width="7" height="4" viewBox="0 0 7 4"><path d="M0 0h7l-3.5 3.5z" fill="#444"/></svg><svg class="a" style="left:350px;top:319px" width="22" height="22" viewBox="0 0 22 22"><path d="M3 14 L10 0.5 L17 14 M6 9h8" fill="none" stroke="#444" stroke-width="2.4"/><rect x="1" y="15.5" width="20" height="5" fill="#ff0000"/></svg><svg class="a" style="left:377px;top:329px" width="7" height="4" viewBox="0 0 7 4"><path d="M0 0h7l-3.5 3.5z" fill="#444"/></svg><div class="a" style="left:391px;top:318px;width:1px;height:26px;background:#d4d4d4"></div><div class="t" style="left:399px;top:324px;font-size:13px;color:#3a78c2;">中</div><svg class="a" style="left:411px;top:319px" width="10" height="21" viewBox="0 0 10 21"><path d="M2 1v4M5 0.5v5M8 1v4M1 5.5h8M2 8l6 5M8 8l-6 5M1.5 15h7l-7 5h7" fill="none" stroke="#555" stroke-width="1"/></svg><svg class="a" style="left:427px;top:329px" width="7" height="4" viewBox="0 0 7 4"><path d="M0 0h7l-3.5 3.5z" fill="#444"/></svg><div class="t" style="left:274px;top:360px;font-size:15px;color:#444;">字型</div><svg class="a" style="left:425px;top:365px" width="10" height="10" viewBox="0 0 10 10"><path d="M0.5 8V0.5H8" fill="none" stroke="#777"/><path d="M3 3L9 9M9 5V9H5" fill="none" stroke="#777"/></svg><svg class="a" style="left:448px;top:283px" width="18" height="10.5" viewBox="0 0 18 10.5"><rect x="0" y="0.0" width="18" height="1.3" fill="#555"/><rect x="0" y="3.5" width="18" height="1.3" fill="#555"/><rect x="0" y="7.0" width="18" height="1.3" fill="#555"/></svg><div class="a" style="left:470px;top:280px;width:26px;height:27px;background:#c5c5c5"></div><svg class="a" style="left:474px;top:288px" width="18" height="10.5" viewBox="0 0 18 10.5"><rect x="0" y="0.0" width="18" height="1.3" fill="#555"/><rect x="0" y="3.5" width="18" height="1.3" fill="#555"/><rect x="0" y="7.0" width="18" height="1.3" fill="#555"/></svg><svg class="a" style="left:500px;top:292px" width="18" height="10.5" viewBox="0 0 18 10.5"><rect x="0" y="0.0" width="18" height="1.3" fill="#555"/><rect x="0" y="3.5" width="18" height="1.3" fill="#555"/><rect x="0" y="7.0" width="18" height="1.3" fill="#555"/></svg><div class="a" style="left:526px;top:281px;width:1px;height:26px;background:#d4d4d4"></div><svg class="a" style="left:534px;top:283px" width="22" height="20" viewBox="0 0 22 20"><text x="0" y="14" font-size="12" fill="#555" transform="rotate(-45 8 10)" font-family="Liberation Sans">ab</text><path d="M6 19L19 6M14 5.5h5.5v5.5" fill="none" stroke="#555" stroke-width="1.4"/></svg><svg class="a" style="left:558px;top:292px" width="7" height="4" viewBox="0 0 7 4"><path d="M0 0h7l-3.5 3.5z" fill="#444"/></svg><div class="a" style="left:587px;top:276px;width:1px;height:70px;background:#d4d4d4"></div><svg class="a" style="left:597px;top:283px" width="18" height="19" viewBox="0 0 18 19"><text x="0" y="8" font-size="10" fill="#555" font-family="Liberation Sans">ab</text><text x="0" y="18" font-size="10" fill="#555" font-family="Liberation Sans">c</text><path d="M16 11v3Q16 16 14 16H9M11 13.5l-2.5 2.5l2.5 2.5" fill="none" stroke="#3a78c2" stroke-width="1.3"/></svg><div class="t" style="left:619px;top:286px;font-size:15px;color:#363636;">自動換列</div><svg class="a" style="left:449px;top:325px" width="15" height="13.2" viewBox="0 0 15 13.2"><rect x="0" y="0.0" width="15" height="1.3" fill="#555"/><rect x="0" y="3.3" width="10" height="1.3" fill="#555"/><rect x="0" y="6.6" width="15" height="1.3" fill="#555"/><rect x="0" y="9.899999999999999" width="10" height="1.3" fill="#555"/></svg><svg class="a" style="left:475px;top:325px" width="19" height="13.2" viewBox="0 0 19 13.2"><rect x="0" y="0.0" width="16" height="1.3" fill="#555"/><rect x="3" y="3.3" width="10" height="1.3" fill="#555"/><rect x="0" y="6.6" width="16" height="1.3" fill="#555"/><rect x="3" y="9.899999999999999" width="10" height="1.3" fill="#555"/></svg><svg class="a" style="left:501px;top:325px" width="20" height="13.2" viewBox="0 0 20 13.2"><rect x="0" y="0.0" width="15" height="1.3" fill="#555"/><rect x="5" y="3.3" width="10" height="1.3" fill="#555"/><rect x="0" y="6.6" width="15" height="1.3" fill="#555"/><rect x="5" y="9.899999999999999" width="10" height="1.3" fill="#555"/></svg><div class="a" style="left:526px;top:318px;width:1px;height:26px;background:#d4d4d4"></div><svg class="a" style="left:534px;top:321px" width="20" height="18" viewBox="0 0 20 18"><path d="M10 1.5h9M10 5.5h9M10 9.5h9M10 13.5h9M0 17h19" stroke="#555" stroke-width="1.2"/><path d="M0 1h19" stroke="#555" stroke-width="1.2"/><path d="M1 9L6 5V13z" fill="#3a78c2"/><path d="M5 9h4" stroke="#3a78c2" stroke-width="2"/></svg><svg class="a" style="left:560px;top:321px" width="20" height="18" viewBox="0 0 20 18"><path d="M10 5.5h9M10 9.5h9M10 13.5h9M0 17h19M0 1h19" stroke="#555" stroke-width="1.2"/><path d="M9 9L4 5V13z" fill="#3a78c2"/><path d="M1 9h4" stroke="#3a78c2" stroke-width="2"/></svg><svg class="a" style="left:594px;top:319px" width="21" height="21" viewBox="0 0 21 21"><rect x="0.5" y="0.5" width="19" height="19" fill="#fff" stroke="#666"/><path d="M0.5 4.5h19M0.5 15.5h19M10 0.5v4M10 15.5v4M5 4.5v11" stroke="#666"/><path d="M4 10h12M6.5 7.5L4 10l2.5 2.5M13.5 7.5L16 10l-2.5 2.5" fill="none" stroke="#3a78c2" stroke-width="1.3"/></svg><div class="t" style="left:619px;top:323px;font-size:15px;color:#363636;">跨欄置中</div><svg class="a" style="left:688px;top:329px" width="7" height="4" viewBox="0 0 7 4"><path d="M0 0h7l-3.5 3.5z" fill="#444"/></svg><div class="t" style="left:532px;top:360px;font-size:15px;color:#444;">對齊方式</div><svg class="a" style="left:689px;top:365px" width="10" height="10" viewBox="0 0 10 10"><path d="M0.5 8V0.5H8" fill="none" stroke="#777"/><path d="M3 3L9 9M9 5V9H5" fill="none" stroke="#777"/></svg><div class="a" style="left:708px;top:279px;width:152px;height:28px;background:#fff;border:1px solid #c6c6c6"></div><div class="t" style="left:712px;top:285px;font-size:15px;color:#262626;">通用格式</div><svg class="a" style="left:849px;top:292px" width="7" height="4" viewBox="0 0 7 4"><path d="M0 0h7l-3.5 3.5z" fill="#444"/></svg><div class="t" style="left:714px;top:320px;font-size:19px;color:#444;">$</div><svg class="a" style="left:737px;top:329px" width="7" height="4" viewBox="0 0 7 4"><path d="M0 0h7l-3.5 3.5z" fill="#444"/></svg><div class="t" style="left:751px;top:321px;font-size:17px;color:#444;">%</div><div class="t" style="left:781px;top:318px;font-size:18px;color:#444;"><b>,</b></div><div class="a" style="left:803px;top:318px;width:1px;height:26px;background:#d4d4d4"></div><svg class="a" style="left:812px;top:322px" width="18" height="17" viewBox="0 0 18 17"><path d="M1 4L5 1V7z" fill="#3a78c2"/><path d="M4 4h4" stroke="#3a78c2" stroke-width="1.6"/><text x="8" y="8" font-size="8" fill="#444" font-family="Liberation Sans">.0</text><text x="3" y="16" font-size="8" fill="#444" font-family="Liberation Sans">.00</text></svg><svg class="a" style="left:837px;top:322px" width="18" height="17" viewBox="0 0 18 17"><text x="3" y="8" font-size="8" fill="#444" font-family="Liberation Sans">.00</text><path d="M7 12L3 9V15z" fill="#3a78c2" transform="rotate(180 5 12)"/><path d="M0 12h5" stroke="#3a78c2" stroke-width="1.6"/><text x="8" y="16" font-size="8" fill="#444" font-family="Liberation Sans">.0</text></svg><div class="t" style="left:760px;top:360px;font-size:15px;color:#444;">數值</div><svg class="a" style="left:850px;top:365px" width="10" height="10" viewBox="0 0 10 10"><path d="M0.5 8V0.5H8" fill="none" stroke="#777"/><path d="M3 3L9 9M9 5V9H5" fill="none" stroke="#777"/></svg><svg class="a" style="left:891px;top:276px" width="40" height="36" viewBox="0 0 40 36"><rect x="1.5" y="1.5" width="33" height="27" fill="#fff" stroke="#7a7a7a"/><path d="M12 1.5v27M23 1.5v27M1.5 8.5h33M1.5 15.5h33M1.5 22.5h33" stroke="#7a7a7a"/><rect x="12.5" y="2" width="7" height="6" fill="#d9603b"/><rect x="12.5" y="9" width="10" height="6" fill="#4a86c5"/><rect x="12.5" y="16" width="8" height="6" fill="#d9603b"/><rect x="12.5" y="23" width="5" height="5" fill="#4a86c5"/><rect x="20" y="18" width="18" height="16" fill="#fff" stroke="#7a7a7a"/><text x="24" y="31" font-size="13" fill="#444" font-family="Liberation Sans">≠</text></svg><div class="t" style="left:872px;top:317px;font-size:14.5px;color:#363636;">設定格式化</div><div class="t" style="left:882px;top:336px;font-size:14.5px;color:#363636;">的條件</div><svg class="a" style="left:929px;top:342px" width="7" height="4" viewBox="0 0 7 4"><path d="M0 0h7l-3.5 3.5z" fill="#444"/></svg><svg class="a" style="left:963px;top:276px" width="40" height="36" viewBox="0 0 40 36"><rect x="1.5" y="1.5" width="32" height="27" fill="#fff" stroke="#7a7a7a"/><rect x="9" y="8" width="24" height="20" fill="#c4d9ee"/><path d="M9 1.5v27M17 1.5v27M25 1.5v27M1.5 8.5h32M1.5 15.5h32M1.5 22.5h32" stroke="#7a7a7a"/><path d="M38 9 L30 20 L27 17z" fill="#7a7a7a"/><path d="M20 34 Q22 24 28 22 L31 25 Q28 32 20 34z" fill="#4a86c5"/></svg><div class="t" style="left:952px;top:317px;font-size:14.5px;color:#363636;">格式化為</div><div class="t" style="left:962px;top:336px;font-size:14.5px;color:#363636;">表格</div><svg class="a" style="left:995px;top:342px" width="7" height="4" viewBox="0 0 7 4"><path d="M0 0h7l-3.5 3.5z" fill="#444"/></svg><div class="a" style="left:1015px;top:272px;width:420px;height:78px;background:#fff;border:1px solid #c6c6c6"></div><div class="a" style="left:1417px;top:273px;width:17px;height:25px;background:#e1e1e1"></div><div class="a" style="left:1417px;top:298px;width:17px;height:1px;background:#d4d4d4"></div><div class="a" style="left:1417px;top:322px;width:17px;height:1px;background:#d4d4d4"></div><div class="a" style="left:1416px;top:273px;width:1px;height:76px;background:#d4d4d4"></div><svg class="a" style="left:1422px;top:284px" width="7" height="4" viewBox="0 0 7 4"><path d="M0 3.5h7l-3.5-3.5z" fill="#c0c0c0"/></svg><svg class="a" style="left:1422px;top:309px" width="7" height="4" viewBox="0 0 7 4"><path d="M0 0h7l-3.5 3.5z" fill="#555"/></svg><svg class="a" style="left:1422px;top:332px" width="7" height="7" viewBox="0 0 7 7"><rect x="0" y="0" width="7" height="1.2" fill="#555"/><path d="M0 3h7l-3.5 3.5z" fill="#555"/></svg><div class="a" style="left:1016px;top:275px;width:134px;height:37px;border:4px solid #c6c6c6;background:#fff"></div><div class="t" style="left:1026px;top:283px;font-size:20px;color:#000;font-family:'Liberation Serif',serif">一般</div><div class="a" style="left:1153px;top:279px;width:125px;height:28px;background:#ffeb9c"></div><div class="t" style="left:1159px;top:283px;font-size:19px;color:#9c5700;font-family:'Liberation Serif',serif">中等</div><div class="a" style="left:1286px;top:279px;width:125px;height:28px;background:#c6efce"></div><div class="t" style="left:1291px;top:283px;font-size:19px;color:#006100;font-family:'Liberation Serif',serif">好</div><div class="a" style="left:1020px;top:315px;width:125px;height:28px;background:#ffc7ce"></div><div class="t" style="left:1026px;top:319px;font-size:19px;color:#9c0006;font-family:'Liberation Serif',serif">壞</div><div class="a" style="left:1153px;top:315px;width:125px;height:28px;background:#f2f2f2;border:1px solid #7f7f7f"></div><div class="t" style="left:1158px;top:318px;font-size:20.5px;color:#fa7d00;font-family:'Liberation Serif',serif"><b>計算方式</b></div><div class="t" style="left:1290px;top:318px;font-size:20px;color:#fa7d00;font-family:'Liberation Serif',serif">連結的儲...</div><div class="a" style="left:1286px;top:340px;width:125px;height:1px;background:#fa7d00"></div><div class="a" style="left:1286px;top:342px;width:125px;height:1px;background:#fa7d00"></div><div class="t" style="left:1139px;top:360px;font-size:15px;color:#444;">樣式</div><svg class="a" style="left:1452px;top:274px" width="38" height="38" viewBox="0 0 38 38"><path d="M3.5 1.5h18v7h-18zM12.5 1.5v7M3.5 20.5h18v15h-18zM3.5 28h18M12.5 20.5v15" fill="#fff" stroke="#7a7a7a"/><rect x="16.5" y="11.5" width="20" height="6" fill="#c4d9ee" stroke="#7a7a7a"/><path d="M26.5 11.5v6" stroke="#7a7a7a"/><path d="M1 14.5L7 10V19z" fill="#4a86c5"/><path d="M5 14.5h9" stroke="#4a86c5" stroke-width="2.2"/></svg><div class="t" style="left:1458px;top:316px;font-size:15px;color:#363636;">插入</div><svg class="a" style="left:1471px;top:342px" width="7" height="4" viewBox="0 0 7 4"><path d="M0 0h7l-3.5 3.5z" fill="#444"/></svg><svg class="a" style="left:1505px;top:274px" width="38" height="38" viewBox="0 0 38 38"><path d="M1.5 1.5h18v7h-18zM10.5 1.5v7M1.5 20.5h18v15h-18zM1.5 28h18M10.5 20.5v15" fill="#fff" stroke="#7a7a7a"/><rect x="7.5" y="11.5" width="14" height="6" fill="#c4d9ee" stroke="#7a7a7a"/><path d="M20 6L35 21M35 7L19 23" stroke="#d9603b" stroke-width="2.2"/></svg><div class="t" style="left:1508px;top:316px;font-size:15px;color:#363636;">刪除</div><svg class="a" style="left:1521px;top:342px" width="7" height="4" viewBox="0 0 7 4"><path d="M0 0h7l-3.5 3.5z" fill="#444"/></svg><svg class="a" style="left:1554px;top:273px" width="36" height="40" viewBox="0 0 36 40"><path d="M1 1v5M34 1v5M3 3.5h29M7 1.5L3 3.5L7 5.5M28 1.5L32 3.5L28 5.5" fill="none" stroke="#4a86c5" stroke-width="1.3"/><rect x="1.5" y="8.5" width="33" height="27" fill="#fff" stroke="#7a7a7a"/><path d="M10 8.5v27M19 8.5v27M27 8.5v27M1.5 15.5h33M1.5 22.5h33M1.5 29h33" stroke="#7a7a7a"/><rect x="10" y="15.5" width="9" height="14" fill="#4a86c5"/></svg><div class="t" style="left:1558px;top:316px;font-size:15px;color:#363636;">格式</div><svg class="a" style="left:1569px;top:342px" width="7" height="4" viewBox="0 0 7 4"><path d="M0 0h7l-3.5 3.5z" fill="#444"/></svg><div class="t" style="left:1500px;top:360px;font-size:15px;color:#444;">儲存格</div><svg class="a" style="left:1610px;top:273px" width="18" height="18" viewBox="0 0 18 18"><path d="M16 3.5V1.5H1.5L9 9L1.5 16.5H16V14.5" fill="none" stroke="#444" stroke-width="2.2"/></svg><div class="t" style="left:1633px;top:275px;font-size:15px;color:#363636;">自動加總</div><svg class="a" style="left:1702px;top:281px" width="7" height="4" viewBox="0 0 7 4"><path d="M0 0h7l-3.5 3.5z" fill="#444"/></svg><svg class="a" style="left:1609px;top:300px" width="19" height="19" viewBox="0 0 19 19"><rect x="1" y="1" width="16" height="17" fill="#fff" stroke="#777" stroke-width="1.3"/><rect x="0" y="0" width="18" height="2" fill="#666"/><path d="M9 5v9M5 10l4 4l4-4" fill="none" stroke="#3a78c2" stroke-width="2"/></svg><div class="t" style="left:1633px;top:302px;font-size:15px;color:#363636;">填滿</div><svg class="a" style="left:1666px;top:309px" width="7" height="4" viewBox="0 0 7 4"><path d="M0 0h7l-3.5 3.5z" fill="#444"/></svg><svg class="a" style="left:1610px;top:327px" width="19" height="19" viewBox="0 0 19 19"><path d="M2 12L11 2L18 8L9 18z" fill="#e8879a"/><path d="M2 12L9 18L5 18.5L1 15z" fill="#e8a7b2"/></svg><div class="t" style="left:1633px;top:329px;font-size:15px;color:#363636;">清除</div><svg class="a" style="left:1666px;top:336px" width="7" height="4" viewBox="0 0 7 4"><path d="M0 0h7l-3.5 3.5z" fill="#444"/></svg><svg class="a" style="left:1734px;top:275px" width="38" height="36" viewBox="0 0 38 36"><text x="1" y="15" font-size="16" fill="#4a86c5" font-family="Liberation Sans">A</text><text x="1" y="34" font-size="16" fill="#8e5bc1" font-family="Liberation Sans">Z</text><path d="M15 12h20l-7 8v10l-5-3v-7z" fill="#666"/></svg><div class="t" style="left:1716px;top:316px;font-size:15px;color:#363636;">排序與篩選</div><svg class="a" style="left:1752px;top:342px" width="7" height="4" viewBox="0 0 7 4"><path d="M0 0h7l-3.5 3.5z" fill="#444"/></svg><div class="a" style="left:1796px;top:269px;width:44px;height:83px;background:#c5c5c5"></div><svg class="a" style="left:1802px;top:275px" width="34" height="35" viewBox="0 0 34 35"><circle cx="21" cy="12" r="9.5" fill="#fff" stroke="#4a86c5" stroke-width="2.5"/><path d="M14 19L3 30" stroke="#4a86c5" stroke-width="3.5" stroke-linecap="round"/></svg><div class="t" style="left:1796px;top:316px;font-size:15px;color:#363636;">尋找與</div><div class="t" style="left:1797px;top:335px;font-size:15px;color:#363636;">選取</div><svg class="a" style="left:1830px;top:342px" width="7" height="4" viewBox="0 0 7 4"><path d="M0 0h7l-3.5 3.5z" fill="#444"/></svg><div class="a" style="left:1845px;top:270px;width:1px;height:106px;background:#d4d4d4"></div><div class="a" style="left:1791px;top:264px;width:54px;height:93px;border:5px solid #ed1c24;border-bottom:none"></div><div class="a" style="left:12px;top:392px;width:126px;height:33px;background:#fff;border:1px solid #c6c6c6"></div><div class="t" style="left:18px;top:401px;font-size:19px;color:#222;font-family:'Liberation Serif',serif">A1</div><svg class="a" style="left:123px;top:406px" width="7" height="4" viewBox="0 0 7 4"><path d="M0 0h7l-3.5 3.5z" fill="#666"/></svg><div class="a" style="left:155px;top:402px;width:3px;height:4px;background:#b0b0b0"></div><div class="a" style="left:155px;top:408px;width:3px;height:4px;background:#b0b0b0"></div><div class="a" style="left:155px;top:414px;width:3px;height:4px;background:#b0b0b0"></div><div class="a" style="left:175px;top:392px;width:137px;height:33px;background:#fff;border:1px solid #c6c6c6"></div><svg class="a" style="left:189px;top:401px" width="15" height="14" viewBox="0 0 15 14"><path d="M1.5 1.5L13.5 12.5M13.5 1.5L1.5 12.5" stroke="#b8b8b8" stroke-width="1.8"/></svg><svg class="a" style="left:234px;top:401px" width="17" height="15" viewBox="0 0 17 15"><path d="M1.5 8L6 13L15.5 2" fill="none" stroke="#b8b8b8" stroke-width="2.2"/></svg><div class="t" style="left:279px;top:397px;font-size:19px;color:#666;font-family:'Liberation Serif',serif"><i><b>f</b>x</i></div><div class="a" style="left:315px;top:392px;width:1585px;height:33px;background:#fff;border:1px solid #c6c6c6;border-right:none"></div><div class="t" style="left:331px;top:401px;font-size:19px;color:#222;font-family:'Liberation Serif',serif">device_id</div><div class="a" style="left:5px;top:437px;width:1895px;height:26px;background:#e6e6e6"></div><div class="a" style="left:42px;top:437px;width:158px;height:26px;background:#d2d2d2"></div><div class="a" style="left:5px;top:463px;width:36px;height:514px;background:#e6e6e6"></div><div class="a" style="left:5px;top:464px;width:36px;height:26px;background:#d2d2d2"></div><svg class="a" style="left:19px;top:441px" width="20" height="20"><polygon points="19,1 19,19 1,19" fill="#b4b4b4"/></svg><div class="a" style="left:5px;top:463px;width:1895px;height:1px;background:#ababab"></div><div class="a" style="left:42px;top:490px;width:1858px;height:1px;background:#d4d4d4"></div><div class="a" style="left:5px;top:490px;width:36px;height:1px;background:#c6c6c6"></div><div class="a" style="left:42px;top:517px;width:1858px;height:1px;background:#d4d4d4"></div><div class="a" style="left:5px;top:517px;width:36px;height:1px;background:#c6c6c6"></div><div class="a" style="left:42px;top:544px;width:1858px;height:1px;background:#d4d4d4"></div><div class="a" style="left:5px;top:544px;width:36px;height:1px;background:#c6c6c6"></div><div class="a" style="left:42px;top:571px;width:1858px;height:1px;background:#d4d4d4"></div><div class="a" style="left:5px;top:571px;width:36px;height:1px;background:#c6c6c6"></div><div class="a" style="left:42px;top:598px;width:1858px;height:1px;background:#d4d4d4"></div><div class="a" style="left:5px;top:598px;width:36px;height:1px;background:#c6c6c6"></div><div class="a" style="left:42px;top:625px;width:1858px;height:1px;background:#d4d4d4"></div><div class="a" style="left:5px;top:625px;width:36px;height:1px;background:#c6c6c6"></div><div class="a" style="left:42px;top:652px;width:1858px;height:1px;background:#d4d4d4"></div><div class="a" style="left:5px;top:652px;width:36px;height:1px;background:#c6c6c6"></div><div class="a" style="left:42px;top:679px;width:1858px;height:1px;background:#d4d4d4"></div><div class="a" style="left:5px;top:679px;width:36px;height:1px;background:#c6c6c6"></div><div class="a" style="left:42px;top:706px;width:1858px;height:1px;background:#d4d4d4"></div><div class="a" style="left:5px;top:706px;width:36px;height:1px;background:#c6c6c6"></div><div class="a" style="left:42px;top:733px;width:1858px;height:1px;background:#d4d4d4"></div><div class="a" style="left:5px;top:733px;width:36px;height:1px;background:#c6c6c6"></div><div class="a" style="left:42px;top:760px;width:1858px;height:1px;background:#d4d4d4"></div><div class="a" style="left:5px;top:760px;width:36px;height:1px;background:#c6c6c6"></div><div class="a" style="left:42px;top:787px;width:1858px;height:1px;background:#d4d4d4"></div><div class="a" style="left:5px;top:787px;width:36px;height:1px;background:#c6c6c6"></div><div class="a" style="left:42px;top:814px;width:1858px;height:1px;background:#d4d4d4"></div><div class="a" style="left:5px;top:814px;width:36px;height:1px;background:#c6c6c6"></div><div class="a" style="left:42px;top:841px;width:1858px;height:1px;background:#d4d4d4"></div><div class="a" style="left:5px;top:841px;width:36px;height:1px;background:#c6c6c6"></div><div class="a" style="left:42px;top:868px;width:1858px;height:1px;background:#d4d4d4"></div><div class="a" style="left:5px;top:868px;width:36px;height:1px;background:#c6c6c6"></div><div class="a" style="left:42px;top:895px;width:1858px;height:1px;background:#d4d4d4"></div><div class="a" style="left:5px;top:895px;width:36px;height:1px;background:#c6c6c6"></div><div class="a" style="left:42px;top:922px;width:1858px;height:1px;background:#d4d4d4"></div><div class="a" style="left:5px;top:922px;width:36px;height:1px;background:#c6c6c6"></div><div class="a" style="left:42px;top:949px;width:1858px;height:1px;background:#d4d4d4"></div><div class="a" style="left:5px;top:949px;width:36px;height:1px;background:#c6c6c6"></div><div class="a" style="left:42px;top:976px;width:1858px;height:1px;background:#d4d4d4"></div><div class="a" style="left:5px;top:976px;width:36px;height:1px;background:#c6c6c6"></div><div class="a" style="left:41px;top:437px;width:1px;height:540px;background:#ababab"></div><div class="a" style="left:200px;top:437px;width:1px;height:26px;background:#c6c6c6"></div><div class="a" style="left:200px;top:464px;width:1px;height:513px;background:#d4d4d4"></div><div class="a" style="left:594px;top:437px;width:1px;height:26px;background:#c6c6c6"></div><div class="a" style="left:594px;top:464px;width:1px;height:513px;background:#d4d4d4"></div><div class="a" style="left:674px;top:437px;width:1px;height:26px;background:#c6c6c6"></div><div class="a" style="left:674px;top:464px;width:1px;height:513px;background:#d4d4d4"></div><div class="a" style="left:854px;top:437px;width:1px;height:26px;background:#c6c6c6"></div><div class="a" style="left:854px;top:464px;width:1px;height:513px;background:#d4d4d4"></div><div class="a" style="left:934px;top:437px;width:1px;height:26px;background:#c6c6c6"></div><div class="a" style="left:934px;top:464px;width:1px;height:513px;background:#d4d4d4"></div><div class="a" style="left:1014px;top:437px;width:1px;height:26px;background:#c6c6c6"></div><div class="a" style="left:1014px;top:464px;width:1px;height:513px;background:#d4d4d4"></div><div class="a" style="left:1094px;top:437px;width:1px;height:26px;background:#c6c6c6"></div><div class="a" style="left:1094px;top:464px;width:1px;height:513px;background:#d4d4d4"></div><div class="a" style="left:1174px;top:437px;width:1px;height:26px;background:#c6c6c6"></div><div class="a" style="left:1174px;top:464px;width:1px;height:513px;background:#d4d4d4"></div><div class="a" style="left:1254px;top:437px;width:1px;height:26px;background:#c6c6c6"></div><div class="a" style="left:1254px;top:464px;width:1px;height:513px;background:#d4d4d4"></div><div class="a" style="left:1334px;top:437px;width:1px;height:26px;background:#c6c6c6"></div><div class="a" style="left:1334px;top:464px;width:1px;height:513px;background:#d4d4d4"></div><div class="a" style="left:1414px;top:437px;width:1px;height:26px;background:#c6c6c6"></div><div class="a" style="left:1414px;top:464px;width:1px;height:513px;background:#d4d4d4"></div><div class="a" style="left:1494px;top:437px;width:1px;height:26px;background:#c6c6c6"></div><div class="a" style="left:1494px;top:464px;width:1px;height:513px;background:#d4d4d4"></div><div class="a" style="left:1574px;top:437px;width:1px;height:26px;background:#c6c6c6"></div><div class="a" style="left:1574px;top:464px;width:1px;height:513px;background:#d4d4d4"></div><div class="a" style="left:1654px;top:437px;width:1px;height:26px;background:#c6c6c6"></div><div class="a" style="left:1654px;top:464px;width:1px;height:513px;background:#d4d4d4"></div><div class="a" style="left:1734px;top:437px;width:1px;height:26px;background:#c6c6c6"></div><div class="a" style="left:1734px;top:464px;width:1px;height:513px;background:#d4d4d4"></div><div class="a" style="left:1814px;top:437px;width:1px;height:26px;background:#c6c6c6"></div><div class="a" style="left:1814px;top:464px;width:1px;height:513px;background:#d4d4d4"></div><div class="a" style="left:1894px;top:437px;width:1px;height:26px;background:#c6c6c6"></div><div class="a" style="left:1894px;top:464px;width:1px;height:513px;background:#d4d4d4"></div><div class="t" style="left:41px;top:440px;width:159px;text-align:center;font-size:17px;color:#217346">A</div><div class="t" style="left:200px;top:440px;width:394px;text-align:center;font-size:17px;color:#222">B</div><div class="t" style="left:594px;top:440px;width:80px;text-align:center;font-size:17px;color:#222">C</div><div class="t" style="left:674px;top:440px;width:180px;text-align:center;font-size:17px;color:#222">D</div><div class="t" style="left:854px;top:440px;width:80px;text-align:center;font-size:17px;color:#222">E</div><div class="t" style="left:934px;top:440px;width:80px;text-align:center;font-size:17px;color:#222">F</div><div class="t" style="left:1014px;top:440px;width:80px;text-align:center;font-size:17px;color:#222">G</div><div class="t" style="left:1094px;top:440px;width:80px;text-align:center;font-size:17px;color:#222">H</div><div class="t" style="left:1174px;top:440px;width:80px;text-align:center;font-size:17px;color:#222">I</div><div class="t" style="left:1254px;top:440px;width:80px;text-align:center;font-size:17px;color:#222">J</div><div class="t" style="left:1334px;top:440px;width:80px;text-align:center;font-size:17px;color:#222">K</div><div class="t" style="left:1414px;top:440px;width:80px;text-align:center;font-size:17px;color:#222">L</div><div class="t" style="left:1494px;top:440px;width:80px;text-align:center;font-size:17px;color:#222">M</div><div class="t" style="left:1574px;top:440px;width:80px;text-align:center;font-size:17px;color:#222">N</div><div class="t" style="left:1654px;top:440px;width:80px;text-align:center;font-size:17px;color:#222">O</div><div class="t" style="left:1734px;top:440px;width:80px;text-align:center;font-size:17px;color:#222">P</div><div class="t" style="left:1814px;top:440px;width:80px;text-align:center;font-size:17px;color:#222">Q</div><div class="t" style="left:5px;top:470px;width:36px;text-align:center;font-size:18px;color:#217346">1</div><div class="t" style="left:44px;top:468px;font-size:22px;color:#111;font-family:'Liberation Serif',serif;transform:scaleX(0.86);transform-origin:0 0">device_id</div><div class="t" style="left:204px;top:468px;font-size:22px;color:#111;font-family:'Liberation Serif',serif;transform:scaleX(0.86);transform-origin:0 0">SiteName</div><div class="t" style="left:598px;top:468px;font-size:22px;color:#111;font-family:'Liberation Serif',serif;transform:scaleX(0.86);transform-origin:0 0">PM25</div><div class="t" style="left:678px;top:468px;font-size:22px;color:#111;font-family:'Liberation Serif',serif;transform:scaleX(0.86);transform-origin:0 0">timestamp</div><div class="t" style="left:5px;top:497px;width:36px;text-align:center;font-size:18px;color:#222">2</div><div class="t" style="left:44px;top:495px;font-size:22px;color:#111;font-family:'Liberation Serif',serif;transform:scaleX(0.86);transform-origin:0 0">08BEAC09FF6A</div><div class="t" style="left:204px;top:495px;font-size:20px;color:#111;font-family:'Liberation Serif',serif">桃園市市立南勢國小(2019)</div><div class="t" style="right:1249px;top:495px;font-size:22px;color:#111;font-family:'Liberation Serif',serif;transform:scaleX(0.95);transform-origin:100% 0">35</div><div class="t" style="right:1069px;top:495px;font-size:22px;color:#111;font-family:'Liberation Serif',serif;transform:scaleX(0.834);transform-origin:100% 0">2022/12/16 00:01</div><div class="t" style="left:5px;top:524px;width:36px;text-align:center;font-size:18px;color:#222">3</div><div class="t" style="left:44px;top:522px;font-size:22px;color:#111;font-family:'Liberation Serif',serif;transform:scaleX(0.86);transform-origin:0 0">08BEAC09FF6A</div><div class="t" style="left:204px;top:522px;font-size:20px;color:#111;font-family:'Liberation Serif',serif">桃園市市立南勢國小(2019)</div><div class="t" style="right:1249px;top:522px;font-size:22px;color:#111;font-family:'Liberation Serif',serif;transform:scaleX(0.95);transform-origin:100% 0">35</div><div class="t" style="right:1069px;top:522px;font-size:22px;color:#111;font-family:'Liberation Serif',serif;transform:scaleX(0.834);transform-origin:100% 0">2022/12/16 00:06</div><div class="t" style="left:5px;top:551px;width:36px;text-align:center;font-size:18px;color:#222">4</div><div class="t" style="left:44px;top:549px;font-size:22px;color:#111;font-family:'Liberation Serif',serif;transform:scaleX(0.86);transform-origin:0 0">08BEAC09FF6A</div><div class="t" style="left:204px;top:549px;font-size:20px;color:#111;font-family:'Liberation Serif',serif">桃園市市立南勢國小(2019)</div><div class="t" style="right:1249px;top:549px;font-size:22px;color:#111;font-family:'Liberation Serif',serif;transform:scaleX(0.95);transform-origin:100% 0">32</div><div class="t" style="right:1069px;top:549px;font-size:22px;color:#111;font-family:'Liberation Serif',serif;transform:scaleX(0.834);transform-origin:100% 0">2022/12/16 00:12</div><div class="t" style="left:5px;top:578px;width:36px;text-align:center;font-size:18px;color:#222">5</div><div class="t" style="left:44px;top:576px;font-size:22px;color:#111;font-family:'Liberation Serif',serif;transform:scaleX(0.86);transform-origin:0 0">08BEAC09FF6A</div><div class="t" style="left:204px;top:576px;font-size:20px;color:#111;font-family:'Liberation Serif',serif">桃園市市立南勢國小(2019)</div><div class="t" style="right:1249px;top:576px;font-size:22px;color:#111;font-family:'Liberation Serif',serif;transform:scaleX(0.95);transform-origin:100% 0">32</div><div class="t" style="right:1069px;top:576px;font-size:22px;color:#111;font-family:'Liberation Serif',serif;transform:scaleX(0.834);transform-origin:100% 0">2022/12/16 00:18</div><div class="t" style="left:5px;top:605px;width:36px;text-align:center;font-size:18px;color:#222">6</div><div class="t" style="left:44px;top:603px;font-size:22px;color:#111;font-family:'Liberation Serif',serif;transform:scaleX(0.86);transform-origin:0 0">08BEAC09FF6A</div><div class="t" style="left:204px;top:603px;font-size:20px;color:#111;font-family:'Liberation Serif',serif">桃園市市立南勢國小(2019)</div><div class="t" style="right:1249px;top:603px;font-size:22px;color:#111;font-family:'Liberation Serif',serif;transform:scaleX(0.95);transform-origin:100% 0">33</div><div class="t" style="right:1069px;top:603px;font-size:22px;color:#111;font-family:'Liberation Serif',serif;transform:scaleX(0.834);transform-origin:100% 0">2022/12/16 00:23</div><div class="t" style="left:5px;top:632px;width:36px;text-align:center;font-size:18px;color:#222">7</div><div class="t" style="left:44px;top:630px;font-size:22px;color:#111;font-family:'Liberation Serif',serif;transform:scaleX(0.86);transform-origin:0 0">08BEAC09FF6A</div><div class="t" style="left:204px;top:630px;font-size:20px;color:#111;font-family:'Liberation Serif',serif">桃園市市立南勢國小(2019)</div><div class="t" style="right:1249px;top:630px;font-size:22px;color:#111;font-family:'Liberation Serif',serif;transform:scaleX(0.95);transform-origin:100% 0">34</div><div class="t" style="right:1069px;top:630px;font-size:22px;color:#111;font-family:'Liberation Serif',serif;transform:scaleX(0.834);transform-origin:100% 0">2022/12/16 00:29</div><div class="t" style="left:5px;top:659px;width:36px;text-align:center;font-size:18px;color:#222">8</div><div class="t" style="left:44px;top:657px;font-size:22px;color:#111;font-family:'Liberation Serif',serif;transform:scaleX(0.86);transform-origin:0 0">08BEAC09FF6A</div><div class="t" style="left:204px;top:657px;font-size:20px;color:#111;font-family:'Liberation Serif',serif">桃園市市立南勢國小(2019)</div><div class="t" style="right:1249px;top:657px;font-size:22px;color:#111;font-family:'Liberation Serif',serif;transform:scaleX(0.95);transform-origin:100% 0">33</div><div class="t" style="right:1069px;top:657px;font-size:22px;color:#111;font-family:'Liberation Serif',serif;transform:scaleX(0.834);transform-origin:100% 0">2022/12/16 00:40</div><div class="t" style="left:5px;top:686px;width:36px;text-align:center;font-size:18px;color:#222">9</div><div class="t" style="left:44px;top:684px;font-size:22px;color:#111;font-family:'Liberation Serif',serif;transform:scaleX(0.86);transform-origin:0 0">08BEAC09FF6A</div><div class="t" style="left:204px;top:684px;font-size:20px;color:#111;font-family:'Liberation Serif',serif">桃園市市立南勢國小(2019)</div><div class="t" style="right:1249px;top:684px;font-size:22px;color:#111;font-family:'Liberation Serif',serif;transform:scaleX(0.95);transform-origin:100% 0">31</div><div class="t" style="right:1069px;top:684px;font-size:22px;color:#111;font-family:'Liberation Serif',serif;transform:scaleX(0.834);transform-origin:100% 0">2022/12/16 00:46</div><div class="t" style="left:5px;top:713px;width:36px;text-align:center;font-size:18px;color:#222">10</div><div class="t" style="left:44px;top:711px;font-size:22px;color:#111;font-family:'Liberation Serif',serif;transform:scaleX(0.86);transform-origin:0 0">08BEAC09FF6A</div><div class="t" style="left:204px;top:711px;font-size:20px;color:#111;font-family:'Liberation Serif',serif">桃園市市立南勢國小(2019)</div><div class="t" style="right:1249px;top:711px;font-size:22px;color:#111;font-family:'Liberation Serif',serif;transform:scaleX(0.95);transform-origin:100% 0">26</div><div class="t" style="right:1069px;top:711px;font-size:22px;color:#111;font-family:'Liberation Serif',serif;transform:scaleX(0.834);transform-origin:100% 0">2022/12/16 00:51</div><div class="t" style="left:5px;top:740px;width:36px;text-align:center;font-size:18px;color:#222">11</div><div class="t" style="left:44px;top:738px;font-size:22px;color:#111;font-family:'Liberation Serif',serif;transform:scaleX(0.86);transform-origin:0 0">08BEAC09FF6A</div><div class="t" style="left:204px;top:738px;font-size:20px;color:#111;font-family:'Liberation Serif',serif">桃園市市立南勢國小(2019)</div><div class="t" style="right:1249px;top:738px;font-size:22px;color:#111;font-family:'Liberation Serif',serif;transform:scaleX(0.95);transform-origin:100% 0">22</div><div class="t" style="right:1069px;top:738px;font-size:22px;color:#111;font-family:'Liberation Serif',serif;transform:scaleX(0.834);transform-origin:100% 0">2022/12/16 01:03</div><div class="t" style="left:5px;top:767px;width:36px;text-align:center;font-size:18px;color:#222">12</div><div class="t" style="left:44px;top:765px;font-size:22px;color:#111;font-family:'Liberation Serif',serif;transform:scaleX(0.86);transform-origin:0 0">08BEAC09FF6A</div><div class="t" style="left:204px;top:765px;font-size:20px;color:#111;font-family:'Liberation Serif',serif">桃園市市立南勢國小(2019)</div><div class="t" style="right:1249px;top:765px;font-size:22px;color:#111;font-family:'Liberation Serif',serif;transform:scaleX(0.95);transform-origin:100% 0">20</div><div class="t" style="right:1069px;top:765px;font-size:22px;color:#111;font-family:'Liberation Serif',serif;transform:scaleX(0.834);transform-origin:100% 0">2022/12/16 01:08</div><div class="t" style="left:5px;top:794px;width:36px;text-align:center;font-size:18px;color:#222">13</div><div class="t" style="left:44px;top:792px;font-size:22px;color:#111;font-family:'Liberation Serif',serif;transform:scaleX(0.86);transform-origin:0 0">08BEAC09FF6A</div><div class="t" style="left:204px;top:792px;font-size:20px;color:#111;font-family:'Liberation Serif',serif">桃園市市立南勢國小(2019)</div><div class="t" style="right:1249px;top:792px;font-size:22px;color:#111;font-family:'Liberation Serif',serif;transform:scaleX(0.95);transform-origin:100% 0">15</div><div class="t" style="right:1069px;top:792px;font-size:22px;color:#111;font-family:'Liberation Serif',serif;transform:scaleX(0.834);transform-origin:100% 0">2022/12/16 01:20</div><div class="t" style="left:5px;top:821px;width:36px;text-align:center;font-size:18px;color:#222">14</div><div class="t" style="left:44px;top:819px;font-size:22px;color:#111;font-family:'Liberation Serif',serif;transform:scaleX(0.86);transform-origin:0 0">08BEAC09FF6A</div><div class="t" style="left:204px;top:819px;font-size:20px;color:#111;font-family:'Liberation Serif',serif">桃園市市立南勢國小(2019)</div><div class="t" style="right:1249px;top:819px;font-size:22px;color:#111;font-family:'Liberation Serif',serif;transform:scaleX(0.95);transform-origin:100% 0">20</div><div class="t" style="right:1069px;top:819px;font-size:22px;color:#111;font-family:'Liberation Serif',serif;transform:scaleX(0.834);transform-origin:100% 0">2022/12/16 01:48</div><div class="t" style="left:5px;top:848px;width:36px;text-align:center;font-size:18px;color:#222">15</div><div class="t" style="left:44px;top:846px;font-size:22px;color:#111;font-family:'Liberation Serif',serif;transform:scaleX(0.86);transform-origin:0 0">08BEAC09FF6A</div><div class="t" style="left:204px;top:846px;font-size:20px;color:#111;font-family:'Liberation Serif',serif">桃園市市立南勢國小(2019)</div><div class="t" style="right:1249px;top:846px;font-size:22px;color:#111;font-family:'Liberation Serif',serif;transform:scaleX(0.95);transform-origin:100% 0">20</div><div class="t" style="right:1069px;top:846px;font-size:22px;color:#111;font-family:'Liberation Serif',serif;transform:scaleX(0.834);transform-origin:100% 0">2022/12/16 01:54</div><div class="t" style="left:5px;top:875px;width:36px;text-align:center;font-size:18px;color:#222">16</div><div class="t" style="left:44px;top:873px;font-size:22px;color:#111;font-family:'Liberation Serif',serif;transform:scaleX(0.86);transform-origin:0 0">08BEAC09FF6A</div><div class="t" style="left:204px;top:873px;font-size:20px;color:#111;font-family:'Liberation Serif',serif">桃園市市立南勢國小(2019)</div><div class="t" style="right:1249px;top:873px;font-size:22px;color:#111;font-family:'Liberation Serif',serif;transform:scaleX(0.95);transform-origin:100% 0">24</div><div class="t" style="right:1069px;top:873px;font-size:22px;color:#111;font-family:'Liberation Serif',serif;transform:scaleX(0.834);transform-origin:100% 0">2022/12/16 02:00</div><div class="t" style="left:5px;top:902px;width:36px;text-align:center;font-size:18px;color:#222">17</div><div class="t" style="left:44px;top:900px;font-size:22px;color:#111;font-family:'Liberation Serif',serif;transform:scaleX(0.86);transform-origin:0 0">08BEAC09FF6A</div><div class="t" style="left:204px;top:900px;font-size:20px;color:#111;font-family:'Liberation Serif',serif">桃園市市立南勢國小(2019)</div><div class="t" style="right:1249px;top:900px;font-size:22px;color:#111;font-family:'Liberation Serif',serif;transform:scaleX(0.95);transform-origin:100% 0">25</div><div class="t" style="right:1069px;top:900px;font-size:22px;color:#111;font-family:'Liberation Serif',serif;transform:scaleX(0.834);transform-origin:100% 0">2022/12/16 02:06</div><div class="t" style="left:5px;top:929px;width:36px;text-align:center;font-size:18px;color:#222">18</div><div class="t" style="left:44px;top:927px;font-size:22px;color:#111;font-family:'Liberation Serif',serif;transform:scaleX(0.86);transform-origin:0 0">08BEAC09FF6A</div><div class="t" style="left:204px;top:927px;font-size:20px;color:#111;font-family:'Liberation Serif',serif">桃園市市立南勢國小(2019)</div><div class="t" style="right:1249px;top:927px;font-size:22px;color:#111;font-family:'Liberation Serif',serif;transform:scaleX(0.95);transform-origin:100% 0">25</div><div class="t" style="right:1069px;top:927px;font-size:22px;color:#111;font-family:'Liberation Serif',serif;transform:scaleX(0.834);transform-origin:100% 0">2022/12/16 02:12</div><div class="t" style="left:5px;top:956px;width:36px;text-align:center;font-size:18px;color:#222">19</div><div class="t" style="left:44px;top:954px;font-size:22px;color:#111;font-family:'Liberation Serif',serif;transform:scaleX(0.86);transform-origin:0 0">08BEAC09FF6A</div><div class="t" style="left:204px;top:954px;font-size:20px;color:#111;font-family:'Liberation Serif',serif">桃園市市立南勢國小(2019)</div><div class="t" style="right:1249px;top:954px;font-size:22px;color:#111;font-family:'Liberation Serif',serif;transform:scaleX(0.95);transform-origin:100% 0">23</div><div class="t" style="right:1069px;top:954px;font-size:22px;color:#111;font-family:'Liberation Serif',serif;transform:scaleX(0.834);transform-origin:100% 0">2022/12/16 02:29</div><div class="a" style="left:40px;top:462px;width:162px;height:29px;border:2px solid #217346"></div><div class="a" style="left:198px;top:487px;width:6px;height:6px;background:#217346;border:1px solid #fff"></div><div class="a" style="left:1711px;top:352px;width:189px;height:342px;background:#fff;border:1px solid #c6c6c6;box-shadow:1px 1px 2px rgba(0,0,0,.15)"></div><div class="a" style="left:1709px;top:352px;width:190px;height:37px;background:#ed1c24"></div><div class="a" style="left:1714px;top:357px;width:179px;height:27px;background:#c5c5c5"></div><svg class="a" style="left:1718px;top:361px" width="21" height="19" viewBox="0 0 21 19"><circle cx="12" cy="7.5" r="5.5" fill="#fff" stroke="#3a78c2" stroke-width="1.7"/><path d="M8 11.5L2 17.5" stroke="#3a78c2" stroke-width="2.4" stroke-linecap="round"/></svg><div class="t" style="left:1750px;top:364px;font-size:14.5px;color:#262626;">尋找(<u>F</u>)...</div><div class="t" style="left:1750px;top:394px;font-size:14.5px;color:#444;">取代(<u>R</u>)...</div><div class="t" style="left:1750px;top:424px;font-size:14.5px;color:#444;">到(<u>G</u>)...</div><div class="t" style="left:1750px;top:454px;font-size:14.5px;color:#444;">特殊目標(<u>S</u>)...</div><div class="t" style="left:1750px;top:487px;font-size:14.5px;color:#444;">公式(<u>U</u>)</div><div class="t" style="left:1750px;top:517px;font-size:14.5px;color:#444;">註解(<u>M</u>)</div><div class="t" style="left:1750px;top:547px;font-size:14.5px;color:#444;">設定格式化的條件(<u>C</u>)</div><div class="t" style="left:1750px;top:577px;font-size:14.5px;color:#444;">常數(<u>N</u>)</div><div class="t" style="left:1750px;top:607px;font-size:14.5px;color:#444;">資料驗證(<u>V</u>)</div><div class="t" style="left:1750px;top:640px;font-size:14.5px;color:#444;">選取物件(<u>O</u>)</div><div class="t" style="left:1750px;top:670px;font-size:14.5px;color:#444;">選取範圍窗格(<u>P</u>)...</div><div class="a" style="left:1752px;top:476px;width:147px;height:1px;background:#e1e1e1"></div><div class="a" style="left:1752px;top:629px;width:147px;height:1px;background:#e1e1e1"></div><svg class="a" style="left:1716px;top:391px" width="22" height="20" viewBox="0 0 22 20"><text x="1" y="9" font-size="10" fill="#444" font-family="Liberation Sans">a</text><text x="7" y="9" font-size="10" fill="#8e5bc1" font-family="Liberation Sans">b</text><text x="7" y="19" font-size="10" fill="#444" font-family="Liberation Sans">a</text><text x="13" y="19" font-size="10" fill="#3a78c2" font-family="Liberation Sans">c</text><path d="M1.5 10 Q1.5 15 6 15M4 13l2 2l-2 2" fill="none" stroke="#3a78c2" stroke-width="1.2"/></svg><svg class="a" style="left:1719px;top:423px" width="16" height="13" viewBox="0 0 16 13"><path d="M1 6.5H13M8 1.5L13 6.5L8 11.5" fill="none" stroke="#3a78c2" stroke-width="2.2"/></svg><svg class="a" style="left:1720px;top:636px" width="14" height="20" viewBox="0 0 14 20"><path d="M1.5 1.5V16L5 12.5L8 18.5L10 17.5L7.5 11.5H12.5z" fill="#fff" stroke="#555" stroke-width="1"/></svg><svg class="a" style="left:1717px;top:665px" width="22" height="21" viewBox="0 0 22 21"><rect x="1.5" y="1.5" width="6" height="6" fill="none" stroke="#777"/><rect x="8.5" y="1.5" width="6" height="6" fill="#f2b134"/><rect x="1.5" y="9.5" width="6" height="9" fill="none" stroke="#777"/><path d="M10 8V19.5L12.5 17L14.5 21L16 20.3L14 16.3H17.5z" fill="#fff" stroke="#555" stroke-width="0.9"/></svg><svg class="a" style="left:0px;top:179px" width="1900" height="800"><path d="M4.5 6 V798 M4.5 6.5 H1900" fill="none" stroke="#fff" stroke-width="1"/><path d="M4.5 6 V798 M4.5 6.5 H1900" fill="none" stroke="#0078d7" stroke-width="1" stroke-dasharray="4 4"/><rect x="2.5" y="4.5" width="4" height="4" fill="#fff" stroke="#555"/><rect x="963.5" y="4.5" width="4" height="4" fill="#fff" stroke="#555"/></svg><div class="a" style="left:1899px;top:186px;width:1px;height:791px;background:#fff"></div><div class="a" style="left:1900px;top:179px;width:20px;height:798px;background:#f0f0f0"></div><svg class="a" style="left:1903px;top:186px" width="14" height="9" viewBox="0 0 14 9"><path d="M1.5 7.5L7 2L12.5 7.5" fill="none" stroke="#555" stroke-width="1.8"/></svg><div class="a" style="left:1901px;top:201px;width:18px;height:553px;background:#cdcdcd"></div><svg class="a" style="left:1903px;top:962px" width="14" height="9" viewBox="0 0 14 9"><path d="M1.5 1.5L7 7L12.5 1.5" fill="none" stroke="#555" stroke-width="1.8"/></svg><div class="a" style="left:0px;top:977px;width:1920px;height:21px;background:#f0f0f0"></div><svg class="a" style="left:5px;top:983px" width="9" height="12" viewBox="0 0 9 12"><path d="M7 1.5L2 6L7 10.5" fill="none" stroke="#555" stroke-width="1.8"/></svg><div class="a" style="left:22px;top:978px;width:1826px;height:19px;background:#cdcdcd"></div><svg class="a" style="left:1884px;top:983px" width="9" height="12" viewBox="0 0 9 12"><path d="M2 1.5L7 6L2 10.5" fill="none" stroke="#555" stroke-width="1.8"/></svg><div class="a" style="left:0px;top:998px;width:1920px;height:32px;background:#f0f0f0;border-top:1px solid #dadada"></div><svg class="a" style="left:3px;top:1005px" width="18" height="18" viewBox="0 0 18 18"><path d="M9 1V17M1 9H17" stroke="#334a63" stroke-width="1.5"/><path d="M9 0L6.5 3H11.5zM9 18L6.5 15H11.5zM0 9L3 6.5V11.5zM18 9L15 6.5V11.5z" fill="#334a63"/></svg><div class="t" style="left:26px;top:1006px;font-size:15px;color:#222;">870, 527像素</div><div class="a" style="left:221px;top:999px;width:1px;height:31px;background:#dadada"></div><svg class="a" style="left:227px;top:1005px" width="18" height="18" viewBox="0 0 18 18"><rect x="1.5" y="1.5" width="14" height="13" fill="none" stroke="#445" stroke-dasharray="2 1"/><path d="M3 16.5h13.5V3" fill="none" stroke="#445"/></svg><div class="a" style="left:443px;top:999px;width:1px;height:31px;background:#dadada"></div><svg class="a" style="left:449px;top:1005px" width="18" height="18" viewBox="0 0 18 18"><rect x="3.5" y="1.5" width="13" height="13" fill="none" stroke="#445"/><path d="M1.5 3.5V16.5H14.5" fill="none" stroke="#445"/></svg><div class="t" style="left:472px;top:1006px;font-size:15px;color:#222;">1920 × 1080像素</div><div class="a" style="left:665px;top:999px;width:1px;height:31px;background:#dadada"></div><div class="a" style="left:887px;top:999px;width:1px;height:31px;background:#dadada"></div><div class="a" style="left:1675px;top:999px;width:1px;height:31px;background:#dadada"></div><div class="t" style="left:1695px;top:1006px;font-size:15px;color:#222;">100%</div><svg class="a" style="left:1742px;top:1003px" width="22" height="22" viewBox="0 0 22 22"><defs><linearGradient id="zg" x1="0" y1="0" x2="0" y2="1"><stop offset="0" stop-color="#fff"/><stop offset="1" stop-color="#ddd"/></linearGradient></defs><circle cx="11" cy="11" r="9.5" fill="url(#zg)" stroke="#666"/><path d="M6 11h10" stroke="#333" stroke-width="1.8"/></svg><div class="a" style="left:1776px;top:1011px;width:105px;height:6px;background:#e3e7ea;border:1px solid #d6d9dc"></div><svg class="a" style="left:1820px;top:1004px" width="15" height="22" viewBox="0 0 15 22"><path d="M1 1H14V15L7.5 21L1 15z" fill="#1979ca"/></svg><svg class="a" style="left:1893px;top:1003px" width="22" height="22" viewBox="0 0 22 22"><circle cx="11" cy="11" r="9.5" fill="url(#zg)" stroke="#666"/><path d="M6 11h10M11 6v10" stroke="#333" stroke-width="1.8"/></svg><div class="a" style="left:0px;top:1030px;width:1920px;height:50px;background:linear-gradient(90deg,#4a1f2a 0px,#4a1f2a 60px,#3b1a22 490px,#3d2624 620px,#433029 1000px,#46281f 1300px,#431c1f 1375px,#2a1f24 1450px,#1f3034 1530px,#1f3538 1750px,#203a3d 1920px)"></div><svg class="a" style="left:20px;top:1045px" width="21" height="21" viewBox="0 0 21 21"><path d="M0 2.8L8.5 1.7V9.6H0zM9.5 1.5L20 0V9.6H9.5zM0 10.6H8.5V18.6L0 17.4zM9.5 10.6H20V20.3L9.5 18.8z" fill="#fff"/></svg><div class="a" style="left:60px;top:1030px;width:430px;height:50px;background:#f2f2f2"></div><svg class="a" style="left:74px;top:1044px" width="22" height="22" viewBox="0 0 22 22"><circle cx="13" cy="8" r="6" fill="none" stroke="#111" stroke-width="1.5"/><path d="M8.5 12.5L1 20" stroke="#111" stroke-width="1.6"/></svg><div class="t" style="left:110px;top:1044px;font-size:21px;color:#222;">在這裡輸入文字來搜尋</div><svg class="a" style="left:410px;top:1030px" width="80" height="50"><defs><linearGradient id="cl" x1="0" y1="0" x2="1" y2="0"><stop offset="0" stop-color="#a48b66"/><stop offset="1" stop-color="#dccba6"/></linearGradient><radialGradient id="gb" cx=".4" cy=".35" r=".7"><stop offset="0" stop-color="#f1eef6"/><stop offset="1" stop-color="#b8a9d3"/></radialGradient></defs><path d="M20 50 L20 43 Q28 40 40 43 Q50 47 55 45 Q60 40 64 30 L72 14 Q76 5 80 0 L80 50 Z" fill="url(#cl)"/><path d="M60 40 L66 30 L70 36 Q66 44 60 46z" fill="#8c7656" opacity=".6"/><path d="M21 43.5 Q30 41 50 46.5 L49 48 Q30 44 21 46z" fill="#8fb07a"/><ellipse cx="58" cy="10" rx="6" ry="4" fill="#f4cdd4"/><ellipse cx="63" cy="8" rx="5" ry="4.5" fill="#f6d6dc"/><ellipse cx="62" cy="12" rx="8" ry="2.5" fill="#f2c6ce"/><path d="M11 9 L9 2 M15 9 L17 2" stroke="#333" stroke-width="1.4"/><rect x="21" y="25" width="3" height="19" rx="1" fill="#a898c6"/><rect x="26" y="26" width="3" height="18" rx="1" fill="#b9acd4"/><rect x="39" y="25" width="3" height="20" rx="1" fill="#a898c6"/><rect x="43" y="25" width="3" height="20" rx="1" fill="#b9acd4"/><ellipse cx="33" cy="18" rx="15" ry="10" fill="url(#gb)"/><path d="M9 8 Q16 6 20 12 L18 22 Q12 24 9 20 Q6 16 9 8z" fill="#d8d0e8"/><circle cx="12" cy="13" r="1" fill="#7a4a3a"/></svg><div class="a" style="left:496px;top:1042px;width:1px;height:27px;background:#7a5a62"></div><div class="a" style="left:499px;top:1042px;width:1px;height:27px;background:#7a5a62"></div><svg class="a" style="left:529px;top:1040px" width="31" height="31" viewBox="0 0 31 31"><rect x="0" y="0" width="30" height="30" rx="5" fill="#06c755"/><ellipse cx="15" cy="14" rx="11" ry="9" fill="#fff"/><path d="M9 20L8 26L15 22z" fill="#fff"/><text x="6.5" y="17" font-size="7" font-weight="bold" fill="#06c755" font-family="Liberation Sans">LINE</text></svg><svg class="a" style="left:590px;top:1040px" width="31" height="31" viewBox="0 0 31 31"><circle cx="15.5" cy="15.5" r="14.5" fill="#fff"/><circle cx="15.5" cy="15.5" r="11" fill="#3d2a26"/><path d="M15.5 5L24 10V25L15.5 20L7 25V10z" fill="#fff"/><path d="M15.5 9L20 12V20L15.5 17L11 20V12z" fill="#3d2a26"/></svg><svg class="a" style="left:653px;top:1040px" width="31" height="31"><defs><linearGradient id="eg" x1="0" y1="0" x2="1" y2="1"><stop offset="0" stop-color="#35c1f1"/><stop offset=".6" stop-color="#1e8ad6"/><stop offset="1" stop-color="#0c59a4"/></linearGradient></defs><path d="M15 1 Q29 1 30 14 Q30 20 24 20 H12 Q12 26 20 27 Q14 31 9 29 Q1 25 1 15 Q1 1 15 1z" fill="url(#eg)"/><path d="M15 1 Q29 1 30 14 Q28 8 20 8 Q13 8 12 14 Q9 6 15 1z" fill="#52d17a"/><circle cx="10" cy="24" r="6.5" fill="#d0d0d0" stroke="#3d2a26"/><circle cx="10" cy="22" r="2.2" fill="#888"/><path d="M6 28 Q10 24 14 28" fill="#888"/></svg><svg class="a" style="left:716px;top:1041px" width="30" height="28" viewBox="0 0 30 28"><path d="M0 3h10l3 3h16v20H0z" fill="#f0b429"/><rect x="0" y="8" width="29" height="18" fill="#ffd25e"/><path d="M8 17h13v9H17v-5h-5v5H8z" fill="#1e7fd1"/></svg><svg class="a" style="left:776px;top:1040px" width="32" height="30" viewBox="0 0 32 30"><path d="M1 12L16 1L31 12V28H1z" fill="#0a63c4"/><path d="M1 12H31V28H1z" fill="#28a8ea"/><path d="M1 12L16 22L31 12V10L16 20L1 10z" fill="#fff"/><path d="M1 28L16 18L31 28z" fill="#50c3f5"/></svg><svg class="a" style="left:839px;top:1040px" width="30" height="31" viewBox="0 0 30 31"><path d="M9 6 Q9 1 15 1 Q21 1 21 6" fill="none" stroke="#1ea2e8" stroke-width="2.2"/><rect x="0" y="6" width="30" height="24" rx="3" fill="#f3f3f3"/><rect x="9" y="12" width="5.5" height="5.5" fill="#f25022"/><rect x="15.5" y="12" width="5.5" height="5.5" fill="#7fba00"/><rect x="9" y="18.5" width="5.5" height="5.5" fill="#00a4ef"/><rect x="15.5" y="18.5" width="5.5" height="5.5" fill="#ffb900"/></svg><svg class="a" style="left:901px;top:1040px" width="30" height="30" viewBox="0 0 30 30"><rect x="8" y="4" width="21" height="22" fill="#fff"/><path d="M12 8h15M12 12h15M12 16h15M12 20h15" stroke="#2b579a" stroke-width="2"/><path d="M0 3L17 0V30L0 27z" fill="#2b579a"/><text x="2" y="20" font-size="12" font-weight="bold" fill="#fff" font-family="Liberation Sans">W</text></svg><svg class="a" style="left:963px;top:1040px" width="31" height="31" viewBox="0 0 31 31"><circle cx="15.5" cy="15.5" r="15" fill="#db4437"/><path d="M15.5 15.5 L2.5 23 A15 15 0 0 0 22 29z" fill="#0f9d58"/><path d="M15.5 15.5 L22 29 A15 15 0 0 0 28.5 8 L15.5 8z" fill="#ffcd40"/><circle cx="15.5" cy="15.5" r="6.8" fill="#fff"/><circle cx="15.5" cy="15.5" r="5.3" fill="#4285f4"/></svg><div class="a" style="left:1010px;top:1030px;width:60px;height:50px;background:#5b4a45"></div><svg class="a" style="left:1024px;top:1040px" width="32" height="30" viewBox="0 0 32 30"><ellipse cx="14" cy="17" rx="13" ry="10" fill="#d6e6f3" stroke="#7aa3c9"/><circle cx="7" cy="17" r="2.2" fill="#e74c3c"/><circle cx="11" cy="12" r="2.2" fill="#2ecc71"/><circle cx="17" cy="11" r="2.2" fill="#f1c40f"/><circle cx="11" cy="21" r="2" fill="#3498db"/><path d="M30 1L15 28" stroke="#e08a2e" stroke-width="3"/><path d="M28 0h4l-2 5z" fill="#f5b041"/></svg><svg class="a" style="left:1089px;top:1040px" width="30" height="30" viewBox="0 0 30 30"><rect x="8" y="4" width="21" height="22" fill="#fff"/><path d="M16 8h12M16 12h12M16 16h12M16 20h12M21 6v18" stroke="#217346" stroke-width="1.6"/><path d="M0 3L17 0V30L0 27z" fill="#217346"/><text x="3" y="20" font-size="13" font-weight="bold" fill="#fff" font-family="Liberation Sans">X</text></svg><div class="a" style="left:705px;top:1077px;width:50px;height:3px;background:#76b9ed"></div><div class="a" style="left:891px;top:1077px;width:50px;height:3px;background:#76b9ed"></div><div class="a" style="left:953px;top:1077px;width:50px;height:3px;background:#76b9ed"></div><div class="a" style="left:1010px;top:1077px;width:60px;height:3px;background:#76b9ed"></div><div class="a" style="left:1077px;top:1077px;width:51px;height:3px;background:#76b9ed"></div><svg class="a" style="left:1474px;top:1042px" width="31" height="30" viewBox="0 0 31 30"><circle cx="14" cy="14" r="13" fill="#fff"/><circle cx="14" cy="14" r="11" fill="#1e8fe1"/><text x="8" y="21" font-size="18" font-weight="bold" fill="#fff" font-family="Liberation Sans">?</text><circle cx="23" cy="23" r="6" fill="#f5a623"/><rect x="22" y="21" width="2" height="5" fill="#fff"/></svg><svg class="a" style="left:1514px;top:1050px" width="18" height="11" viewBox="0 0 18 11"><path d="M1.5 10L9 2L16.5 10" fill="none" stroke="#fff" stroke-width="1.4"/></svg><svg class="a" style="left:1542px;top:1045px" width="23" height="22" viewBox="0 0 23 22"><ellipse cx="9" cy="10" rx="8" ry="6" fill="#ddd"/><ellipse cx="5" cy="12" rx="5" ry="4" fill="#ccc"/><circle cx="16" cy="15" r="6.5" fill="#e81123" stroke="#1f3034"/><path d="M13.5 12.5L18.5 17.5M18.5 12.5L13.5 17.5" stroke="#fff" stroke-width="1.4"/></svg><svg class="a" style="left:1572px;top:1046px" width="23" height="20" viewBox="0 0 23 20"><rect x="2.5" y="1.5" width="19" height="13" fill="none" stroke="#fff" stroke-width="1.2"/><path d="M8 19h8M12 14.5V19" stroke="#fff" stroke-width="1.2"/><rect x="0" y="0" width="5" height="6" fill="#1f3034" stroke="#fff"/></svg><svg class="a" style="left:1602px;top:1046px" width="24" height="18" viewBox="0 0 24 18"><rect x="6.5" y="5.5" width="15" height="10" fill="none" stroke="#fff" stroke-width="1.2"/><rect x="8.5" y="7.5" width="11" height="6" fill="#fff"/><rect x="22" y="8.5" width="1.5" height="4" fill="#fff"/><path d="M3 5v4M5 5v4M2 9h4v2Q4 13 4 15" fill="none" stroke="#fff" stroke-width="1"/></svg><svg class="a" style="left:1632px;top:1046px" width="23" height="20" viewBox="0 0 23 20"><path d="M1 7H5L10 2V18L5 13H1z" fill="none" stroke="#fff" stroke-width="1.2"/><path d="M13 7Q15 10 13 13M16 5Q19 10 16 15M19 3Q23 10 19 17" fill="none" stroke="#fff" stroke-width="1.2"/></svg><svg class="a" style="left:1666px;top:1046px" width="16" height="20" viewBox="0 0 16 20"><rect x="1.5" y="5.5" width="9" height="9" rx="1.5" fill="none" stroke="#fff" stroke-width="1.2"/><path d="M10.5 8L15 6V14L10.5 12" fill="none" stroke="#fff" stroke-width="1.2"/><path d="M2 3Q6 0 10 3M2 17Q6 20 10 17" fill="none" stroke="#fff"/></svg><div class="t" style="left:1692px;top:1045px;font-size:19px;color:#fff;">英</div><div class="a" style="left:1729px;top:1045px;width:20px;height:20px;background:#fff"></div><div class="t" style="left:1729px;top:1045px;font-size:19px;color:#000;">易</div><div class="t" style="left:1772px;top:1035px;font-size:15px;color:#fff;">下午 02:47</div><div class="t" style="left:1764px;top:1057px;font-size:17px;color:#fff;">2022/12/17</div><svg class="a" style="left:1867px;top:1043px" width="35" height="33" viewBox="0 0 35 33"><path d="M1 1H21V17H9L5 21V17H1z" fill="#fff"/><path d="M5 6h12M5 10h12M5 14h8" stroke="#1f3538" stroke-width="1.5"/><circle cx="22" cy="20" r="10" fill="#2f3e40" stroke="#777" stroke-width="1"/><text x="18.5" y="26" font-size="15" fill="#fff" font-family="Liberation Sans">1</text></svg><div class="a" style="left:1914px;top:1030px;width:1px;height:50px;background:#566"></div></body></html>
